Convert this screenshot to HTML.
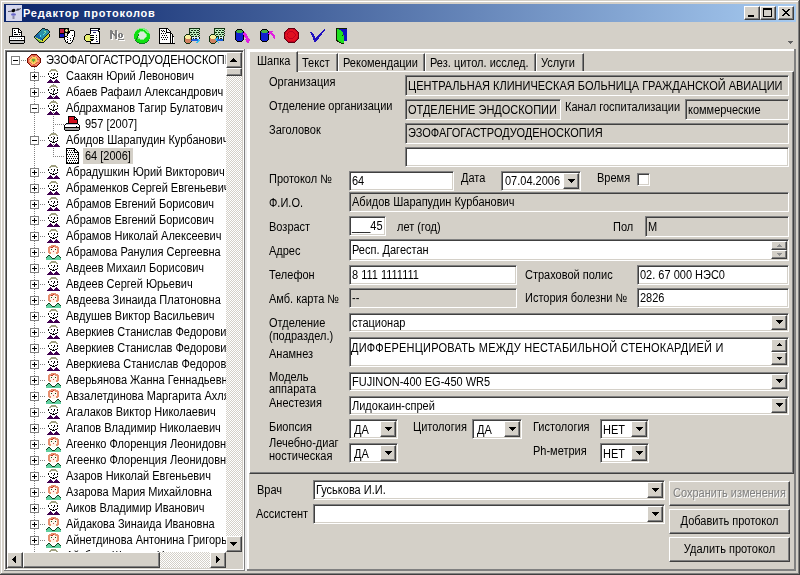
<!DOCTYPE html><html><head><meta charset="utf-8"><style>
html,body{margin:0;padding:0;width:800px;height:575px;overflow:hidden;background:#d4d0c8}
div,span,svg{position:absolute;box-sizing:border-box}
.t{font:12px/14px "Liberation Sans",sans-serif;white-space:pre;color:#000;transform:scaleX(0.9167);transform-origin:0 0;filter:contrast(1)}
</style></head><body>
<div style="left:0px;top:0px;width:800px;height:1px;background:#d4d0c8"></div>
<div style="left:0px;top:0px;width:1px;height:575px;background:#d4d0c8"></div>
<div style="left:1px;top:1px;width:798px;height:1px;background:#ffffff"></div>
<div style="left:1px;top:1px;width:1px;height:573px;background:#ffffff"></div>
<div style="left:0px;top:574px;width:800px;height:1px;background:#404040"></div>
<div style="left:799px;top:0px;width:1px;height:575px;background:#404040"></div>
<div style="left:1px;top:573px;width:798px;height:1px;background:#808080"></div>
<div style="left:798px;top:1px;width:1px;height:573px;background:#808080"></div>
<div style="left:4px;top:4px;width:792px;height:18px;background:linear-gradient(to right,#0a246a,#a6caf0)"></div>
<svg style="left:6px;top:5px" width="16" height="16"><rect width="16" height="16" fill="#d4d6ec"/><path d="M2 6.5L8 6M10 5.5L15 3.5" stroke="#505060" stroke-width="1" fill="none"/><ellipse cx="7.5" cy="5.5" rx="2" ry="1.6" fill="#000" transform="rotate(-25 7.5 5.5)"/><ellipse cx="12" cy="4.5" rx="1.5" ry="1" fill="#404050"/><ellipse cx="7.5" cy="9.5" rx="2.5" ry="1.2" fill="#6a68c8"/><rect x="6.5" y="11" width="2" height="3" fill="#8a8aa8"/></svg>
<span style="left:23px;top:7px;font:bold 11px/13px 'Liberation Sans',sans-serif;letter-spacing:0.8px;color:#fff;white-space:pre">Редактор протоколов</span>
<div style="left:744px;top:6px;width:16px;height:14px;background:#d4d0c8;border-style:solid;border-width:1px;border-color:#ffffff #404040 #404040 #ffffff;box-shadow:inset -1px -1px 0 #808080"></div>
<div style="left:748px;top:15px;width:6px;height:2px;background:#000"></div>
<div style="left:760px;top:6px;width:16px;height:14px;background:#d4d0c8;border-style:solid;border-width:1px;border-color:#ffffff #404040 #404040 #ffffff;box-shadow:inset -1px -1px 0 #808080"></div>
<div style="left:763px;top:8px;width:9px;height:9px;border:1px solid #000;border-top-width:2px"></div>
<div style="left:778px;top:6px;width:16px;height:14px;background:#d4d0c8;border-style:solid;border-width:1px;border-color:#ffffff #404040 #404040 #ffffff;box-shadow:inset -1px -1px 0 #808080"></div>
<svg style="left:782px;top:9px" width="8" height="7" shape-rendering="crispEdges"><path fill="#000" d="M0 0h2v1h-2zM6 0h2v1h-2zM1 1h2v1h-2zM5 1h2v1h-2zM2 2h4v1h-4zM3 3h2v1h-2zM2 4h4v1h-4zM1 5h2v1h-2zM5 5h2v1h-2zM0 6h2v1h-2zM6 6h2v1h-2z"/></svg>
<svg style="left:9px;top:28px" width="16" height="16" shape-rendering="crispEdges"><path fill="#000" d="M3 0h7v1h-7zM3 1h1v1h-1zM9 1h2v1h-2zM3 2h1v1h-1zM5 2h1v1h-1zM9 2h1v1h-1zM11 2h1v1h-1zM3 3h1v1h-1zM9 3h1v1h-1zM12 3h1v1h-1zM3 4h1v1h-1zM5 4h2v1h-2zM9 4h4v1h-4zM3 5h1v1h-1zM12 5h1v1h-1zM3 6h1v1h-1zM5 6h4v1h-4zM10 6h1v1h-1zM12 6h1v1h-1zM3 7h1v1h-1zM12 7h1v1h-1zM0 8h16v1h-16zM0 9h1v1h-1zM15 9h1v1h-1zM0 10h1v1h-1zM12 10h1v1h-1zM15 10h1v1h-1zM0 11h1v1h-1zM15 11h1v1h-1zM0 12h16v1h-16zM0 13h1v1h-1zM15 13h1v1h-1zM0 14h1v1h-1zM15 14h1v1h-1zM1 15h14v1h-14z"/><path fill="#fff" d="M4 1h5v1h-5zM4 2h1v1h-1zM6 2h3v1h-3zM10 2h1v1h-1zM4 3h5v1h-5zM10 3h2v1h-2zM4 4h1v1h-1zM7 4h2v1h-2zM4 5h8v1h-8zM4 6h1v1h-1zM9 6h1v1h-1zM11 6h1v1h-1zM4 7h8v1h-8zM1 9h14v1h-14zM1 10h1v1h-1zM3 10h1v1h-1zM5 10h1v1h-1zM7 10h1v1h-1zM9 10h1v1h-1zM11 10h1v1h-1zM13 10h2v1h-2zM1 11h14v1h-14z"/><path fill="#c0c0c0" d="M2 10h1v1h-1zM4 10h1v1h-1zM6 10h1v1h-1zM8 10h1v1h-1zM10 10h1v1h-1zM1 13h14v1h-14zM1 14h14v1h-14z"/></svg>
<svg style="left:34px;top:28px" width="16" height="16" shape-rendering="crispEdges"><path fill="#102020" d="M8 0h3v1h-3zM7 1h1v1h-1zM11 1h3v1h-3zM6 2h1v1h-1zM14 2h1v1h-1zM5 3h1v1h-1zM15 3h1v1h-1zM4 4h1v1h-1zM15 4h1v1h-1zM3 5h1v1h-1zM14 5h1v1h-1zM2 6h1v1h-1zM13 6h1v1h-1zM15 6h1v1h-1zM1 7h1v1h-1zM12 7h1v1h-1zM15 7h1v1h-1zM0 8h1v1h-1zM11 8h1v1h-1zM15 8h1v1h-1zM0 9h1v1h-1zM10 9h1v1h-1zM14 9h1v1h-1zM1 10h1v1h-1zM9 10h1v1h-1zM13 10h1v1h-1zM2 11h1v1h-1zM8 11h1v1h-1zM12 11h1v1h-1zM3 12h1v1h-1zM8 12h1v1h-1zM11 12h1v1h-1zM4 13h1v1h-1zM10 13h1v1h-1zM5 14h5v1h-5z"/><path fill="#2890a8" d="M8 1h3v1h-3zM7 2h7v1h-7zM6 3h4v1h-4zM12 3h3v1h-3zM5 4h6v1h-6zM12 4h3v1h-3zM4 5h6v1h-6zM11 5h3v1h-3zM5 6h4v1h-4zM10 6h3v1h-3zM7 7h5v1h-5zM7 8h4v1h-4zM7 9h3v1h-3zM8 10h1v1h-1z"/><path fill="#80e0a0" d="M10 3h2v1h-2zM11 4h1v1h-1zM10 5h1v1h-1z"/><path fill="#1868a8" d="M3 6h2v1h-2zM2 7h4v1h-4zM1 8h5v1h-5zM2 9h5v1h-5zM4 10h4v1h-4zM6 11h2v1h-2z"/><path fill="#50e0f0" d="M9 6h1v1h-1zM6 7h1v1h-1zM6 8h1v1h-1z"/><path fill="#d8d830" d="M14 6h1v1h-1zM13 7h2v1h-2zM12 8h3v1h-3zM11 9h3v1h-3zM10 10h3v1h-3zM9 11h3v1h-3zM9 12h2v1h-2zM7 13h3v1h-3z"/><path fill="#b8e060" d="M1 9h1v1h-1zM2 10h2v1h-2zM4 11h2v1h-2zM6 12h2v1h-2z"/><path fill="#80c030" d="M3 11h1v1h-1zM4 12h2v1h-2zM5 13h2v1h-2z"/></svg>
<svg style="left:59px;top:28px" width="16" height="16" shape-rendering="crispEdges"><path fill="#000" d="M0 0h10v1h-10zM0 1h1v1h-1zM5 1h1v1h-1zM9 1h1v1h-1zM0 2h1v1h-1zM5 2h1v1h-1zM9 2h1v1h-1zM11 2h4v1h-4zM0 3h1v1h-1zM5 3h1v1h-1zM9 3h2v1h-2zM15 3h1v1h-1zM0 4h1v1h-1zM5 4h6v1h-6zM15 4h1v1h-1zM0 5h6v1h-6zM8 5h2v1h-2zM15 5h1v1h-1zM0 6h1v1h-1zM5 6h1v1h-1zM8 6h1v1h-1zM15 6h1v1h-1zM0 7h1v1h-1zM5 7h1v1h-1zM8 7h1v1h-1zM13 7h1v1h-1zM15 7h1v1h-1zM0 8h1v1h-1zM5 8h3v1h-3zM15 8h1v1h-1zM0 9h6v1h-6zM8 9h1v1h-1zM14 9h1v1h-1zM5 10h1v1h-1zM11 10h1v1h-1zM14 10h1v1h-1zM5 11h1v1h-1zM8 11h1v1h-1zM14 11h1v1h-1zM6 12h1v1h-1zM11 12h1v1h-1zM13 12h1v1h-1zM6 13h1v1h-1zM8 13h1v1h-1zM13 13h1v1h-1zM7 14h2v1h-2zM12 14h1v1h-1zM9 15h3v1h-3z"/><path fill="#c02040" d="M1 1h4v1h-4zM1 2h4v1h-4zM1 3h4v1h-4zM1 4h4v1h-4z"/><path fill="#605830" d="M6 1h1v1h-1zM8 1h1v1h-1zM6 3h1v1h-1zM8 3h1v1h-1z"/><path fill="#e8e090" d="M7 1h1v1h-1zM6 2h3v1h-3zM7 3h1v1h-1z"/><path fill="#fff" d="M11 3h4v1h-4zM11 4h4v1h-4zM10 5h5v1h-5zM9 6h6v1h-6zM9 7h4v1h-4zM14 7h1v1h-1zM8 8h7v1h-7zM6 9h2v1h-2zM9 9h5v1h-5zM6 10h5v1h-5zM12 10h2v1h-2zM6 11h2v1h-2zM9 11h5v1h-5zM7 12h4v1h-4zM12 12h1v1h-1zM7 13h1v1h-1zM9 13h4v1h-4zM9 14h3v1h-3z"/><path fill="#1010c0" d="M1 6h4v1h-4zM1 7h4v1h-4zM1 8h4v1h-4z"/></svg>
<svg style="left:84px;top:28px" width="16" height="16" shape-rendering="crispEdges"><path fill="#000" d="M6 0h10v1h-10zM6 1h1v1h-1zM14 1h2v1h-2zM6 2h1v1h-1zM14 2h1v1h-1zM6 3h1v1h-1zM14 3h2v1h-2zM6 4h1v1h-1zM15 4h1v1h-1zM6 5h1v1h-1zM15 5h1v1h-1zM2 6h4v1h-4zM15 6h1v1h-1zM1 7h1v1h-1zM6 7h4v1h-4zM12 7h1v1h-1zM15 7h1v1h-1zM0 8h1v1h-1zM15 8h1v1h-1zM0 9h1v1h-1zM6 9h4v1h-4zM12 9h1v1h-1zM15 9h1v1h-1zM0 10h1v1h-1zM15 10h1v1h-1zM0 11h1v1h-1zM6 11h4v1h-4zM12 11h1v1h-1zM15 11h1v1h-1zM1 12h1v1h-1zM7 12h2v1h-2zM15 12h1v1h-1zM2 13h5v1h-5zM15 13h1v1h-1zM6 14h1v1h-1zM15 14h1v1h-1zM6 15h10v1h-10z"/><path fill="#fff" d="M7 1h7v1h-7zM15 2h1v1h-1zM7 3h7v1h-7zM7 4h2v1h-2zM12 4h3v1h-3zM7 5h8v1h-8zM6 6h9v1h-9zM10 7h2v1h-2zM13 7h2v1h-2zM7 8h8v1h-8zM10 9h2v1h-2zM13 9h2v1h-2zM7 10h8v1h-8zM10 11h2v1h-2zM13 11h2v1h-2zM9 12h6v1h-6zM7 13h5v1h-5zM14 13h1v1h-1zM7 14h8v1h-8z"/><path fill="#303070" d="M7 2h7v1h-7zM9 4h3v1h-3zM12 13h2v1h-2z"/><path fill="#e8f070" d="M2 7h4v1h-4zM1 8h6v1h-6zM1 9h5v1h-5zM1 10h6v1h-6zM1 11h5v1h-5zM2 12h5v1h-5z"/></svg>
<svg style="left:111px;top:31px" width="14" height="10" shape-rendering="crispEdges"><path fill="#fff" d="M0 0h2v1h-2zM5 0h2v1h-2zM0 1h3v1h-3zM5 1h2v1h-2zM0 2h3v1h-3zM5 2h2v1h-2zM0 3h4v1h-4zM5 3h2v1h-2zM9 3h3v1h-3zM0 4h2v1h-2zM3 4h4v1h-4zM8 4h2v1h-2zM11 4h2v1h-2zM0 5h2v1h-2zM4 5h3v1h-3zM8 5h2v1h-2zM11 5h2v1h-2zM0 6h2v1h-2zM5 6h2v1h-2zM8 6h2v1h-2zM11 6h2v1h-2zM0 7h2v1h-2zM5 7h2v1h-2zM9 7h3v1h-3zM0 8h2v1h-2zM5 8h2v1h-2zM8 9h6v1h-6z"/></svg>
<svg style="left:110px;top:30px" width="14" height="10" shape-rendering="crispEdges"><path fill="#808080" d="M0 0h2v1h-2zM5 0h2v1h-2zM0 1h3v1h-3zM5 1h2v1h-2zM0 2h3v1h-3zM5 2h2v1h-2zM0 3h4v1h-4zM5 3h2v1h-2zM9 3h3v1h-3zM0 4h2v1h-2zM3 4h4v1h-4zM8 4h2v1h-2zM11 4h2v1h-2zM0 5h2v1h-2zM4 5h3v1h-3zM8 5h2v1h-2zM11 5h2v1h-2zM0 6h2v1h-2zM5 6h2v1h-2zM8 6h2v1h-2zM11 6h2v1h-2zM0 7h2v1h-2zM5 7h2v1h-2zM9 7h3v1h-3zM0 8h2v1h-2zM5 8h2v1h-2zM8 9h6v1h-6z"/></svg>
<svg style="left:134px;top:28px" width="16" height="16" shape-rendering="crispEdges"><path fill="#80f080" d="M5 0h6v1h-6zM3 1h2v1h-2zM9 1h4v1h-4zM2 2h1v1h-1zM11 2h3v1h-3zM1 3h1v1h-1zM6 3h4v1h-4zM12 3h3v1h-3zM5 4h1v1h-1zM10 4h1v1h-1zM13 4h2v1h-2zM0 5h1v1h-1zM4 5h1v1h-1zM11 5h1v1h-1zM15 5h1v1h-1zM12 6h1v1h-1zM12 7h1v1h-1zM12 8h1v1h-1zM4 9h1v1h-1zM11 9h1v1h-1zM4 10h2v1h-2zM10 10h1v1h-1zM6 11h4v1h-4z"/><path fill="#10e010" d="M5 1h4v1h-4zM3 2h8v1h-8zM2 3h4v1h-4zM10 3h2v1h-2zM1 4h4v1h-4zM11 4h2v1h-2zM1 5h3v1h-3zM12 5h3v1h-3zM0 6h4v1h-4zM13 6h3v1h-3zM0 7h4v1h-4zM13 7h3v1h-3zM0 8h3v1h-3zM13 8h3v1h-3zM0 9h3v1h-3zM12 9h4v1h-4zM0 10h2v1h-2zM3 10h1v1h-1zM11 10h5v1h-5zM1 11h1v1h-1zM3 11h3v1h-3zM10 11h5v1h-5zM2 12h12v1h-12zM3 13h10v1h-10zM5 14h6v1h-6z"/><path fill="#d8ecd8" d="M6 4h4v1h-4zM5 5h6v1h-6zM5 6h7v1h-7zM5 7h7v1h-7zM4 8h8v1h-8zM5 9h6v1h-6zM6 10h4v1h-4z"/><path fill="#108020" d="M4 6h1v1h-1zM4 7h1v1h-1zM3 8h1v1h-1zM3 9h1v1h-1zM2 10h1v1h-1zM2 11h1v1h-1zM1 12h1v1h-1zM14 12h1v1h-1zM2 13h1v1h-1zM13 13h1v1h-1zM3 14h2v1h-2zM11 14h2v1h-2zM5 15h6v1h-6z"/></svg>
<svg style="left:158px;top:28px" width="17" height="16" shape-rendering="crispEdges"><path fill="#000" d="M1 0h9v1h-9zM1 1h1v1h-1zM8 1h1v1h-1zM10 1h1v1h-1zM1 2h1v1h-1zM3 2h1v1h-1zM5 2h1v1h-1zM8 2h1v1h-1zM11 2h1v1h-1zM1 3h1v1h-1zM4 3h1v1h-1zM6 3h1v1h-1zM8 3h1v1h-1zM12 3h1v1h-1zM1 4h1v1h-1zM8 4h5v1h-5zM1 5h1v1h-1zM3 5h1v1h-1zM5 5h1v1h-1zM7 5h1v1h-1zM12 5h2v1h-2zM1 6h1v1h-1zM12 6h1v1h-1zM14 6h1v1h-1zM1 7h1v1h-1zM4 7h1v1h-1zM6 7h1v1h-1zM8 7h1v1h-1zM12 7h1v1h-1zM14 7h1v1h-1zM1 8h1v1h-1zM12 8h1v1h-1zM14 8h2v1h-2zM1 9h1v1h-1zM3 9h1v1h-1zM5 9h1v1h-1zM7 9h1v1h-1zM9 9h1v1h-1zM12 9h1v1h-1zM14 9h1v1h-1zM1 10h1v1h-1zM12 10h1v1h-1zM14 10h1v1h-1zM1 11h1v1h-1zM4 11h1v1h-1zM6 11h1v1h-1zM8 11h1v1h-1zM12 11h1v1h-1zM14 11h1v1h-1zM1 12h1v1h-1zM12 12h1v1h-1zM14 12h1v1h-1zM1 13h1v1h-1zM12 13h1v1h-1zM14 13h1v1h-1zM1 14h1v1h-1zM12 14h1v1h-1zM14 14h1v1h-1zM1 15h16v1h-16z"/><path fill="#fff" d="M2 1h6v1h-6zM9 1h1v1h-1zM2 2h1v1h-1zM4 2h1v1h-1zM6 2h2v1h-2zM9 2h2v1h-2zM2 3h2v1h-2zM5 3h1v1h-1zM7 3h1v1h-1zM9 3h3v1h-3zM2 4h6v1h-6zM2 5h1v1h-1zM4 5h1v1h-1zM6 5h1v1h-1zM8 5h4v1h-4zM2 6h10v1h-10zM13 6h1v1h-1zM2 7h2v1h-2zM5 7h1v1h-1zM7 7h1v1h-1zM9 7h3v1h-3zM13 7h1v1h-1zM2 8h10v1h-10zM13 8h1v1h-1zM2 9h1v1h-1zM4 9h1v1h-1zM6 9h1v1h-1zM8 9h1v1h-1zM10 9h2v1h-2zM13 9h1v1h-1zM15 9h1v1h-1zM2 10h10v1h-10zM13 10h1v1h-1zM15 10h1v1h-1zM2 11h2v1h-2zM5 11h1v1h-1zM7 11h1v1h-1zM9 11h3v1h-3zM13 11h1v1h-1zM15 11h1v1h-1zM2 12h10v1h-10zM13 12h1v1h-1zM15 12h1v1h-1zM2 13h10v1h-10zM13 13h1v1h-1zM15 13h1v1h-1zM2 14h10v1h-10zM13 14h1v1h-1zM15 14h1v1h-1z"/></svg>
<svg style="left:184px;top:28px" width="16" height="16" shape-rendering="crispEdges"><path fill="#103010" d="M5 0h11v1h-11zM5 1h1v1h-1zM15 1h1v1h-1zM5 2h1v1h-1zM7 2h2v1h-2zM10 2h2v1h-2zM13 2h2v1h-2zM5 3h1v1h-1zM15 3h1v1h-1zM5 4h3v1h-3zM9 4h2v1h-2zM12 4h3v1h-3zM5 5h1v1h-1zM15 5h1v1h-1zM2 6h4v1h-4zM7 6h2v1h-2zM10 6h2v1h-2zM13 6h2v1h-2zM1 7h1v1h-1zM6 7h1v1h-1zM15 7h1v1h-1zM0 8h1v1h-1zM7 8h3v1h-3zM11 8h2v1h-2zM14 8h1v1h-1zM0 9h1v1h-1zM7 9h1v1h-1zM15 9h1v1h-1zM0 10h1v1h-1zM7 10h1v1h-1zM9 10h1v1h-1zM11 10h2v1h-2zM15 10h1v1h-1zM0 11h1v1h-1zM7 11h1v1h-1zM0 12h1v1h-1zM0 13h1v1h-1zM7 13h1v1h-1zM1 14h1v1h-1zM6 14h1v1h-1zM2 15h4v1h-4z"/><path fill="#a0d8a0" d="M6 1h1v1h-1zM9 1h1v1h-1zM12 1h1v1h-1zM6 3h1v1h-1zM9 3h1v1h-1zM12 3h1v1h-1zM6 5h1v1h-1zM9 5h1v1h-1zM12 5h1v1h-1zM9 7h1v1h-1zM12 7h1v1h-1z"/><path fill="#c8f0c8" d="M7 1h2v1h-2zM10 1h2v1h-2zM13 1h2v1h-2zM6 2h1v1h-1zM9 2h1v1h-1zM12 2h1v1h-1zM7 3h2v1h-2zM10 3h2v1h-2zM13 3h2v1h-2zM8 4h1v1h-1zM11 4h1v1h-1zM7 5h2v1h-2zM10 5h2v1h-2zM13 5h2v1h-2zM6 6h1v1h-1zM9 6h1v1h-1zM12 6h1v1h-1zM7 7h2v1h-2zM10 7h2v1h-2zM13 7h2v1h-2zM10 8h1v1h-1zM13 8h1v1h-1z"/><path fill="#f8f0a0" d="M2 7h4v1h-4zM1 8h6v1h-6zM1 9h6v1h-6zM2 10h4v1h-4z"/><path fill="#e0e8ff" d="M8 9h7v1h-7zM8 10h1v1h-1zM10 10h1v1h-1zM13 10h2v1h-2z"/><path fill="#d08060" d="M1 10h1v1h-1zM6 10h1v1h-1zM1 11h6v1h-6zM1 12h6v1h-6zM1 13h6v1h-6zM2 14h4v1h-4z"/><path fill="#2060e0" d="M8 11h6v1h-6zM7 12h7v1h-7z"/><path fill="#30c0f0" d="M14 11h1v1h-1zM14 12h2v1h-2zM13 13h2v1h-2zM12 14h2v1h-2z"/></svg>
<svg style="left:209px;top:28px" width="16" height="16" shape-rendering="crispEdges"><path fill="#103010" d="M5 0h11v1h-11zM5 1h1v1h-1zM15 1h1v1h-1zM5 2h1v1h-1zM7 2h2v1h-2zM10 2h2v1h-2zM13 2h2v1h-2zM5 3h1v1h-1zM15 3h1v1h-1zM5 4h3v1h-3zM9 4h2v1h-2zM12 4h3v1h-3zM5 5h1v1h-1zM15 5h1v1h-1zM2 6h4v1h-4zM7 6h2v1h-2zM10 6h2v1h-2zM13 6h2v1h-2zM1 7h1v1h-1zM6 7h1v1h-1zM15 7h1v1h-1zM0 8h1v1h-1zM7 8h3v1h-3zM11 8h2v1h-2zM14 8h1v1h-1zM0 9h1v1h-1zM7 9h1v1h-1zM9 9h1v1h-1zM14 9h1v1h-1zM0 10h1v1h-1zM9 10h1v1h-1zM11 10h2v1h-2zM14 10h1v1h-1zM0 11h1v1h-1zM14 11h1v1h-1zM0 12h1v1h-1zM14 12h1v1h-1zM0 13h1v1h-1zM7 13h1v1h-1zM1 14h1v1h-1zM6 14h1v1h-1zM2 15h4v1h-4z"/><path fill="#a0d8a0" d="M6 1h1v1h-1zM9 1h1v1h-1zM12 1h1v1h-1zM6 3h1v1h-1zM9 3h1v1h-1zM12 3h1v1h-1zM6 5h1v1h-1zM9 5h1v1h-1zM12 5h1v1h-1zM9 7h1v1h-1zM12 7h1v1h-1z"/><path fill="#c8f0c8" d="M7 1h2v1h-2zM10 1h2v1h-2zM13 1h2v1h-2zM6 2h1v1h-1zM9 2h1v1h-1zM12 2h1v1h-1zM7 3h2v1h-2zM10 3h2v1h-2zM13 3h2v1h-2zM8 4h1v1h-1zM11 4h1v1h-1zM7 5h2v1h-2zM10 5h2v1h-2zM13 5h2v1h-2zM6 6h1v1h-1zM9 6h1v1h-1zM12 6h1v1h-1zM7 7h2v1h-2zM10 7h2v1h-2zM13 7h2v1h-2zM10 8h1v1h-1zM13 8h1v1h-1z"/><path fill="#f8f0a0" d="M2 7h4v1h-4zM1 8h6v1h-6zM1 9h6v1h-6zM2 10h4v1h-4z"/><path fill="#30c0f0" d="M8 9h1v1h-1zM7 10h2v1h-2zM6 11h2v1h-2zM7 12h1v1h-1zM8 13h1v1h-1zM9 14h1v1h-1z"/><path fill="#e0e8ff" d="M10 9h4v1h-4zM10 10h1v1h-1zM13 10h1v1h-1z"/><path fill="#d08060" d="M1 10h1v1h-1zM6 10h1v1h-1zM1 11h5v1h-5zM1 12h6v1h-6zM1 13h6v1h-6zM2 14h4v1h-4z"/><path fill="#2060e0" d="M8 11h6v1h-6zM8 12h6v1h-6z"/></svg>
<svg style="left:234px;top:28px" width="16" height="16" shape-rendering="crispEdges"><path fill="#000" d="M3 1h5v1h-5zM2 2h1v1h-1zM8 2h1v1h-1zM1 3h1v1h-1zM9 3h1v1h-1zM1 4h1v1h-1zM9 4h1v1h-1zM1 5h1v1h-1zM1 6h1v1h-1zM1 7h1v1h-1zM9 7h1v1h-1zM1 8h1v1h-1zM9 8h1v1h-1zM1 9h1v1h-1zM9 9h1v1h-1zM1 10h1v1h-1zM9 10h1v1h-1zM1 11h1v1h-1zM9 11h1v1h-1zM2 12h1v1h-1zM8 12h1v1h-1zM3 13h5v1h-5z"/><path fill="#40b040" d="M3 2h5v1h-5zM2 3h7v1h-7zM3 4h5v1h-5z"/><path fill="#1020d0" d="M2 4h1v1h-1zM8 4h1v1h-1zM2 5h7v1h-7zM2 6h7v1h-7zM2 7h7v1h-7zM2 8h7v1h-7zM2 9h7v1h-7zM2 10h7v1h-7zM2 11h7v1h-7zM3 12h5v1h-5z"/><path fill="#e020e0" d="M10 4h1v1h-1zM9 5h3v1h-3zM9 6h4v1h-4zM10 7h3v1h-3zM10 8h4v1h-4zM11 9h3v1h-3zM12 10h3v1h-3zM11 11h5v1h-5zM12 12h4v1h-4zM12 13h3v1h-3zM13 14h2v1h-2z"/></svg>
<svg style="left:259px;top:28px" width="16" height="16" shape-rendering="crispEdges"><path fill="#000" d="M3 1h5v1h-5zM2 2h1v1h-1zM8 2h1v1h-1zM1 3h1v1h-1zM9 3h1v1h-1zM1 4h1v1h-1zM9 4h1v1h-1zM1 5h1v1h-1zM1 6h1v1h-1zM9 6h1v1h-1zM1 7h1v1h-1zM9 7h1v1h-1zM1 8h1v1h-1zM9 8h1v1h-1zM1 9h1v1h-1zM9 9h1v1h-1zM1 10h1v1h-1zM9 10h1v1h-1zM1 11h1v1h-1zM9 11h1v1h-1zM2 12h1v1h-1zM8 12h1v1h-1zM3 13h5v1h-5z"/><path fill="#40b040" d="M3 2h5v1h-5zM2 3h7v1h-7zM3 4h5v1h-5z"/><path fill="#e020e0" d="M10 3h4v1h-4zM10 4h3v1h-3zM9 5h5v1h-5zM10 6h1v1h-1zM12 6h3v1h-3zM13 7h3v1h-3zM14 8h2v1h-2zM14 9h2v1h-2zM15 10h1v1h-1z"/><path fill="#1020d0" d="M2 4h1v1h-1zM8 4h1v1h-1zM2 5h7v1h-7zM2 6h7v1h-7zM2 7h7v1h-7zM2 8h7v1h-7zM2 9h7v1h-7zM2 10h7v1h-7zM2 11h7v1h-7zM3 12h5v1h-5z"/></svg>
<svg style="left:284px;top:28px" width="16" height="16" shape-rendering="crispEdges"><path fill="#600010" d="M4 0h7v1h-7zM3 1h1v1h-1zM11 1h1v1h-1zM2 2h1v1h-1zM12 2h1v1h-1zM1 3h1v1h-1zM13 3h1v1h-1zM0 4h1v1h-1zM14 4h1v1h-1zM0 5h1v1h-1zM14 5h1v1h-1zM0 6h1v1h-1zM14 6h1v1h-1zM0 7h1v1h-1zM14 7h1v1h-1zM0 8h1v1h-1zM14 8h1v1h-1zM0 9h1v1h-1zM14 9h1v1h-1zM0 10h1v1h-1zM14 10h1v1h-1zM1 11h1v1h-1zM13 11h1v1h-1zM2 12h1v1h-1zM12 12h1v1h-1zM3 13h1v1h-1zM11 13h1v1h-1zM4 14h7v1h-7z"/><path fill="#c00020" d="M4 1h2v1h-2zM9 1h2v1h-2zM3 2h1v1h-1zM11 2h1v1h-1zM2 3h1v1h-1zM5 3h4v1h-4zM12 3h1v1h-1zM1 4h1v1h-1zM4 4h1v1h-1zM9 4h1v1h-1zM13 4h1v1h-1zM1 5h1v1h-1zM3 5h1v1h-1zM10 5h1v1h-1zM13 5h1v1h-1zM3 6h1v1h-1zM11 6h1v1h-1zM11 7h1v1h-1zM3 8h1v1h-1zM10 8h1v1h-1zM1 9h1v1h-1zM4 9h1v1h-1zM9 9h1v1h-1zM13 9h1v1h-1zM1 10h1v1h-1zM5 10h4v1h-4zM13 10h1v1h-1zM2 11h1v1h-1zM12 11h1v1h-1zM3 12h1v1h-1zM11 12h1v1h-1zM4 13h7v1h-7z"/><path fill="#e01020" d="M6 1h3v1h-3zM4 2h7v1h-7zM3 3h2v1h-2zM9 3h3v1h-3zM2 4h2v1h-2zM5 4h4v1h-4zM10 4h3v1h-3zM2 5h1v1h-1zM4 5h6v1h-6zM11 5h2v1h-2zM1 6h2v1h-2zM4 6h7v1h-7zM12 6h2v1h-2zM1 7h10v1h-10zM12 7h2v1h-2zM1 8h2v1h-2zM4 8h6v1h-6zM11 8h3v1h-3zM2 9h2v1h-2zM5 9h4v1h-4zM10 9h3v1h-3zM2 10h3v1h-3zM9 10h4v1h-4zM3 11h9v1h-9zM4 12h7v1h-7z"/></svg>
<svg style="left:309px;top:28px" width="16" height="16" shape-rendering="crispEdges"><path fill="#2010c0" d="M15 1h1v1h-1zM14 2h2v1h-2zM13 3h2v1h-2zM1 4h2v1h-2zM12 4h2v1h-2zM2 5h2v1h-2zM11 5h2v1h-2zM2 6h3v1h-3zM10 6h3v1h-3zM3 7h2v1h-2zM9 7h3v1h-3zM3 8h3v1h-3zM8 8h3v1h-3zM4 9h2v1h-2zM7 9h3v1h-3zM4 10h6v1h-6zM4 11h5v1h-5zM5 12h3v1h-3zM5 13h2v1h-2z"/></svg>
<svg style="left:334px;top:28px" width="16" height="16" shape-rendering="crispEdges"><path fill="#102000" d="M2 0h11v1h-11zM2 1h1v1h-1zM2 2h1v1h-1zM2 3h1v1h-1zM2 4h1v1h-1zM2 5h1v1h-1zM2 6h1v1h-1zM2 7h1v1h-1zM8 7h1v1h-1zM2 8h1v1h-1zM2 9h1v1h-1zM2 10h1v1h-1zM2 11h1v1h-1zM2 12h2v1h-2zM3 13h2v1h-2zM5 14h2v1h-2zM7 15h3v1h-3z"/><path fill="#20e020" d="M3 1h2v1h-2zM3 2h4v1h-4zM3 3h5v1h-5zM3 4h6v1h-6zM3 5h6v1h-6zM3 6h6v1h-6zM3 7h5v1h-5zM9 7h1v1h-1zM3 8h7v1h-7zM3 9h7v1h-7zM3 10h7v1h-7zM3 11h7v1h-7zM4 12h6v1h-6zM5 13h5v1h-5zM7 14h3v1h-3z"/><path fill="#1010c0" d="M5 1h8v1h-8zM7 2h6v1h-6zM8 3h5v1h-5zM9 4h4v1h-4zM9 5h4v1h-4zM9 6h4v1h-4zM10 7h3v1h-3zM10 8h3v1h-3zM10 9h3v1h-3zM10 10h3v1h-3zM10 11h3v1h-3zM10 12h3v1h-3z"/></svg>
<svg style="left:788px;top:41px" width="5" height="3" shape-rendering="crispEdges"><path fill="#606060" d="M0 0h5v1h-5zM1 1h3v1h-3zM2 2h1v1h-1z"/></svg>
<div style="left:4px;top:49px;width:1px;height:522px;background:#ffffff"></div>
<div style="left:4px;top:49px;width:240px;height:1px;background:#ffffff"></div>
<div style="left:4px;top:570px;width:241px;height:1px;background:#808080"></div>
<div style="left:5px;top:50px;width:239px;height:520px;background:#fff;border-style:solid;border-width:1px;border-color:#808080 #ffffff #ffffff #808080;box-shadow:inset 1px 1px 0 #404040,inset -1px -1px 0 #d4d0c8"></div>
<div style="left:7px;top:52px;width:219px;height:500px;overflow:hidden">
<svg style="left:0;top:0" width="219" height="500" shape-rendering="crispEdges"><path fill="#808080" d="M14 8h1v1h-1zM16 8h1v1h-1zM18 8h1v1h-1zM27 15h1v1h-1zM27 17h1v1h-1zM27 19h1v1h-1zM27 21h1v1h-1zM27 23h1v1h-1zM27 25h1v1h-1zM27 27h1v1h-1zM27 29h1v1h-1zM27 31h1v1h-1zM27 33h1v1h-1zM27 35h1v1h-1zM27 37h1v1h-1zM27 39h1v1h-1zM27 41h1v1h-1zM27 43h1v1h-1zM27 45h1v1h-1zM27 47h1v1h-1zM27 49h1v1h-1zM27 51h1v1h-1zM27 53h1v1h-1zM27 55h1v1h-1zM27 57h1v1h-1zM27 59h1v1h-1zM27 61h1v1h-1zM27 63h1v1h-1zM27 65h1v1h-1zM27 67h1v1h-1zM27 69h1v1h-1zM27 71h1v1h-1zM27 73h1v1h-1zM27 75h1v1h-1zM27 77h1v1h-1zM27 79h1v1h-1zM27 81h1v1h-1zM27 83h1v1h-1zM27 85h1v1h-1zM27 87h1v1h-1zM27 89h1v1h-1zM27 91h1v1h-1zM27 93h1v1h-1zM27 95h1v1h-1zM27 97h1v1h-1zM27 99h1v1h-1zM27 101h1v1h-1zM27 103h1v1h-1zM27 105h1v1h-1zM27 107h1v1h-1zM27 109h1v1h-1zM27 111h1v1h-1zM27 113h1v1h-1zM27 115h1v1h-1zM27 117h1v1h-1zM27 119h1v1h-1zM27 121h1v1h-1zM27 123h1v1h-1zM27 125h1v1h-1zM27 127h1v1h-1zM27 129h1v1h-1zM27 131h1v1h-1zM27 133h1v1h-1zM27 135h1v1h-1zM27 137h1v1h-1zM27 139h1v1h-1zM27 141h1v1h-1zM27 143h1v1h-1zM27 145h1v1h-1zM27 147h1v1h-1zM27 149h1v1h-1zM27 151h1v1h-1zM27 153h1v1h-1zM27 155h1v1h-1zM27 157h1v1h-1zM27 159h1v1h-1zM27 161h1v1h-1zM27 163h1v1h-1zM27 165h1v1h-1zM27 167h1v1h-1zM27 169h1v1h-1zM27 171h1v1h-1zM27 173h1v1h-1zM27 175h1v1h-1zM27 177h1v1h-1zM27 179h1v1h-1zM27 181h1v1h-1zM27 183h1v1h-1zM27 185h1v1h-1zM27 187h1v1h-1zM27 189h1v1h-1zM27 191h1v1h-1zM27 193h1v1h-1zM27 195h1v1h-1zM27 197h1v1h-1zM27 199h1v1h-1zM27 201h1v1h-1zM27 203h1v1h-1zM27 205h1v1h-1zM27 207h1v1h-1zM27 209h1v1h-1zM27 211h1v1h-1zM27 213h1v1h-1zM27 215h1v1h-1zM27 217h1v1h-1zM27 219h1v1h-1zM27 221h1v1h-1zM27 223h1v1h-1zM27 225h1v1h-1zM27 227h1v1h-1zM27 229h1v1h-1zM27 231h1v1h-1zM27 233h1v1h-1zM27 235h1v1h-1zM27 237h1v1h-1zM27 239h1v1h-1zM27 241h1v1h-1zM27 243h1v1h-1zM27 245h1v1h-1zM27 247h1v1h-1zM27 249h1v1h-1zM27 251h1v1h-1zM27 253h1v1h-1zM27 255h1v1h-1zM27 257h1v1h-1zM27 259h1v1h-1zM27 261h1v1h-1zM27 263h1v1h-1zM27 265h1v1h-1zM27 267h1v1h-1zM27 269h1v1h-1zM27 271h1v1h-1zM27 273h1v1h-1zM27 275h1v1h-1zM27 277h1v1h-1zM27 279h1v1h-1zM27 281h1v1h-1zM27 283h1v1h-1zM27 285h1v1h-1zM27 287h1v1h-1zM27 289h1v1h-1zM27 291h1v1h-1zM27 293h1v1h-1zM27 295h1v1h-1zM27 297h1v1h-1zM27 299h1v1h-1zM27 301h1v1h-1zM27 303h1v1h-1zM27 305h1v1h-1zM27 307h1v1h-1zM27 309h1v1h-1zM27 311h1v1h-1zM27 313h1v1h-1zM27 315h1v1h-1zM27 317h1v1h-1zM27 319h1v1h-1zM27 321h1v1h-1zM27 323h1v1h-1zM27 325h1v1h-1zM27 327h1v1h-1zM27 329h1v1h-1zM27 331h1v1h-1zM27 333h1v1h-1zM27 335h1v1h-1zM27 337h1v1h-1zM27 339h1v1h-1zM27 341h1v1h-1zM27 343h1v1h-1zM27 345h1v1h-1zM27 347h1v1h-1zM27 349h1v1h-1zM27 351h1v1h-1zM27 353h1v1h-1zM27 355h1v1h-1zM27 357h1v1h-1zM27 359h1v1h-1zM27 361h1v1h-1zM27 363h1v1h-1zM27 365h1v1h-1zM27 367h1v1h-1zM27 369h1v1h-1zM27 371h1v1h-1zM27 373h1v1h-1zM27 375h1v1h-1zM27 377h1v1h-1zM27 379h1v1h-1zM27 381h1v1h-1zM27 383h1v1h-1zM27 385h1v1h-1zM27 387h1v1h-1zM27 389h1v1h-1zM27 391h1v1h-1zM27 393h1v1h-1zM27 395h1v1h-1zM27 397h1v1h-1zM27 399h1v1h-1zM27 401h1v1h-1zM27 403h1v1h-1zM27 405h1v1h-1zM27 407h1v1h-1zM27 409h1v1h-1zM27 411h1v1h-1zM27 413h1v1h-1zM27 415h1v1h-1zM27 417h1v1h-1zM27 419h1v1h-1zM27 421h1v1h-1zM27 423h1v1h-1zM27 425h1v1h-1zM27 427h1v1h-1zM27 429h1v1h-1zM27 431h1v1h-1zM27 433h1v1h-1zM27 435h1v1h-1zM27 437h1v1h-1zM27 439h1v1h-1zM27 441h1v1h-1zM27 443h1v1h-1zM27 445h1v1h-1zM27 447h1v1h-1zM27 449h1v1h-1zM27 451h1v1h-1zM27 453h1v1h-1zM27 455h1v1h-1zM27 457h1v1h-1zM27 459h1v1h-1zM27 461h1v1h-1zM27 463h1v1h-1zM27 465h1v1h-1zM27 467h1v1h-1zM27 469h1v1h-1zM27 471h1v1h-1zM27 473h1v1h-1zM27 475h1v1h-1zM27 477h1v1h-1zM27 479h1v1h-1zM27 481h1v1h-1zM27 483h1v1h-1zM27 485h1v1h-1zM27 487h1v1h-1zM27 489h1v1h-1zM27 491h1v1h-1zM27 493h1v1h-1zM27 495h1v1h-1zM27 497h1v1h-1zM27 499h1v1h-1zM27 501h1v1h-1zM27 503h1v1h-1zM27 505h1v1h-1zM27 507h1v1h-1zM33 24h1v1h-1zM35 24h1v1h-1zM37 24h1v1h-1zM33 40h1v1h-1zM35 40h1v1h-1zM37 40h1v1h-1zM33 56h1v1h-1zM35 56h1v1h-1zM37 56h1v1h-1zM48 72h1v1h-1zM50 72h1v1h-1zM52 72h1v1h-1zM54 72h1v1h-1zM56 72h1v1h-1zM33 88h1v1h-1zM35 88h1v1h-1zM37 88h1v1h-1zM48 104h1v1h-1zM50 104h1v1h-1zM52 104h1v1h-1zM54 104h1v1h-1zM56 104h1v1h-1zM33 120h1v1h-1zM35 120h1v1h-1zM37 120h1v1h-1zM33 136h1v1h-1zM35 136h1v1h-1zM37 136h1v1h-1zM33 152h1v1h-1zM35 152h1v1h-1zM37 152h1v1h-1zM33 168h1v1h-1zM35 168h1v1h-1zM37 168h1v1h-1zM33 184h1v1h-1zM35 184h1v1h-1zM37 184h1v1h-1zM33 200h1v1h-1zM35 200h1v1h-1zM37 200h1v1h-1zM33 216h1v1h-1zM35 216h1v1h-1zM37 216h1v1h-1zM33 232h1v1h-1zM35 232h1v1h-1zM37 232h1v1h-1zM33 248h1v1h-1zM35 248h1v1h-1zM37 248h1v1h-1zM33 264h1v1h-1zM35 264h1v1h-1zM37 264h1v1h-1zM33 280h1v1h-1zM35 280h1v1h-1zM37 280h1v1h-1zM33 296h1v1h-1zM35 296h1v1h-1zM37 296h1v1h-1zM33 312h1v1h-1zM35 312h1v1h-1zM37 312h1v1h-1zM33 328h1v1h-1zM35 328h1v1h-1zM37 328h1v1h-1zM33 344h1v1h-1zM35 344h1v1h-1zM37 344h1v1h-1zM33 360h1v1h-1zM35 360h1v1h-1zM37 360h1v1h-1zM33 376h1v1h-1zM35 376h1v1h-1zM37 376h1v1h-1zM33 392h1v1h-1zM35 392h1v1h-1zM37 392h1v1h-1zM33 408h1v1h-1zM35 408h1v1h-1zM37 408h1v1h-1zM33 424h1v1h-1zM35 424h1v1h-1zM37 424h1v1h-1zM33 440h1v1h-1zM35 440h1v1h-1zM37 440h1v1h-1zM33 456h1v1h-1zM35 456h1v1h-1zM37 456h1v1h-1zM33 472h1v1h-1zM35 472h1v1h-1zM37 472h1v1h-1zM33 488h1v1h-1zM35 488h1v1h-1zM37 488h1v1h-1zM33 504h1v1h-1zM35 504h1v1h-1zM37 504h1v1h-1zM46 32h1v1h-1zM46 34h1v1h-1zM46 36h1v1h-1zM46 38h1v1h-1zM46 40h1v1h-1zM46 42h1v1h-1zM46 44h1v1h-1zM46 46h1v1h-1zM46 48h1v1h-1zM46 50h1v1h-1zM46 52h1v1h-1zM46 54h1v1h-1zM46 56h1v1h-1zM46 58h1v1h-1zM46 60h1v1h-1zM46 62h1v1h-1zM46 64h1v1h-1zM46 66h1v1h-1zM46 68h1v1h-1zM46 70h1v1h-1zM46 72h1v1h-1zM46 64h1v1h-1zM46 66h1v1h-1zM46 68h1v1h-1zM46 70h1v1h-1zM46 72h1v1h-1zM46 74h1v1h-1zM46 76h1v1h-1zM46 78h1v1h-1zM46 80h1v1h-1zM46 82h1v1h-1zM46 84h1v1h-1zM46 86h1v1h-1zM46 88h1v1h-1zM46 90h1v1h-1zM46 92h1v1h-1zM46 94h1v1h-1zM46 96h1v1h-1zM46 98h1v1h-1zM46 100h1v1h-1zM46 102h1v1h-1zM46 104h1v1h-1z"/></svg>
<svg style="left:4px;top:4px" width="9" height="9" shape-rendering="crispEdges"><path fill="#808080" d="M0 0h9v1h-9zM0 1h1v1h-1zM8 1h1v1h-1zM0 2h1v1h-1zM8 2h1v1h-1zM0 3h1v1h-1zM8 3h1v1h-1zM0 4h1v1h-1zM8 4h1v1h-1zM0 5h1v1h-1zM8 5h1v1h-1zM0 6h1v1h-1zM8 6h1v1h-1zM0 7h1v1h-1zM8 7h1v1h-1zM0 8h9v1h-9z"/><path fill="#fff" d="M1 1h7v1h-7zM1 2h7v1h-7zM1 3h7v1h-7zM1 4h1v1h-1zM7 4h1v1h-1zM1 5h7v1h-7zM1 6h7v1h-7zM1 7h7v1h-7z"/><path fill="#000" d="M2 4h5v1h-5z"/></svg>
<svg style="left:20px;top:1px" width="16" height="16" shape-rendering="crispEdges"><path fill="#700800" d="M4 1h6v1h-6zM3 2h1v1h-1zM10 2h1v1h-1zM2 3h1v1h-1zM11 3h1v1h-1zM1 4h1v1h-1zM12 4h1v1h-1zM0 5h1v1h-1zM13 5h1v1h-1zM0 6h1v1h-1zM13 6h1v1h-1zM0 7h1v1h-1zM13 7h1v1h-1zM0 8h1v1h-1zM13 8h1v1h-1zM0 9h1v1h-1zM13 9h1v1h-1zM1 10h1v1h-1zM12 10h1v1h-1zM2 11h1v1h-1zM11 11h1v1h-1zM3 12h1v1h-1zM10 12h1v1h-1zM4 13h6v1h-6z"/><path fill="#e86848" d="M4 2h6v1h-6zM3 3h1v1h-1zM6 3h2v1h-2zM10 3h1v1h-1zM2 4h1v1h-1zM4 4h1v1h-1zM9 4h1v1h-1zM11 4h1v1h-1zM1 5h1v1h-1zM3 5h1v1h-1zM10 5h1v1h-1zM12 5h1v1h-1zM1 6h2v1h-2zM10 6h3v1h-3zM1 7h1v1h-1zM12 7h1v1h-1zM1 8h1v1h-1zM12 8h1v1h-1zM1 9h3v1h-3zM9 9h4v1h-4zM2 10h1v1h-1zM4 10h1v1h-1zM8 10h2v1h-2zM11 10h1v1h-1zM3 11h1v1h-1zM6 11h2v1h-2zM10 11h1v1h-1zM4 12h6v1h-6z"/><path fill="#f8a080" d="M4 3h2v1h-2zM8 3h2v1h-2zM3 4h1v1h-1zM10 4h1v1h-1zM2 5h1v1h-1zM11 5h1v1h-1zM2 7h1v1h-1zM10 7h2v1h-2zM2 8h1v1h-1zM10 8h2v1h-2zM3 10h1v1h-1zM10 10h1v1h-1zM4 11h2v1h-2zM8 11h2v1h-2z"/><path fill="#f8d860" d="M5 4h4v1h-4zM4 5h1v1h-1zM8 5h2v1h-2zM3 6h1v1h-1zM9 6h1v1h-1zM3 7h1v1h-1zM9 7h1v1h-1zM3 8h1v1h-1zM9 8h1v1h-1zM4 9h2v1h-2zM7 9h2v1h-2zM5 10h3v1h-3z"/><path fill="#f0b050" d="M5 5h3v1h-3zM4 6h1v1h-1zM8 6h1v1h-1zM4 7h1v1h-1zM8 7h1v1h-1zM4 8h2v1h-2zM7 8h2v1h-2zM6 9h1v1h-1z"/><path fill="#60b030" d="M5 6h3v1h-3zM5 7h3v1h-3zM6 8h1v1h-1z"/></svg>
<span class="t" style="left:39px;top:1px;">ЭЗОФАГОГАСТРОДУОДЕНОСКОПИЯ</span>
<svg style="left:23px;top:20px" width="9" height="9" shape-rendering="crispEdges"><path fill="#808080" d="M0 0h9v1h-9zM0 1h1v1h-1zM8 1h1v1h-1zM0 2h1v1h-1zM8 2h1v1h-1zM0 3h1v1h-1zM8 3h1v1h-1zM0 4h1v1h-1zM8 4h1v1h-1zM0 5h1v1h-1zM8 5h1v1h-1zM0 6h1v1h-1zM8 6h1v1h-1zM0 7h1v1h-1zM8 7h1v1h-1zM0 8h9v1h-9z"/><path fill="#fff" d="M1 1h7v1h-7zM1 2h3v1h-3zM5 2h3v1h-3zM1 3h3v1h-3zM5 3h3v1h-3zM1 4h1v1h-1zM7 4h1v1h-1zM1 5h3v1h-3zM5 5h3v1h-3zM1 6h3v1h-3zM5 6h3v1h-3zM1 7h7v1h-7z"/><path fill="#000" d="M4 2h1v1h-1zM4 3h1v1h-1zM2 4h5v1h-5zM4 5h1v1h-1zM4 6h1v1h-1z"/></svg>
<svg style="left:39px;top:16px" width="16" height="16" shape-rendering="crispEdges"><path fill="#a0a080" d="M5 1h5v1h-5zM4 2h7v1h-7zM3 3h2v1h-2zM10 3h2v1h-2z"/><path fill="#000" d="M2 5h1v1h-1zM5 5h1v1h-1zM8 5h1v1h-1zM11 5h1v1h-1zM2 6h1v1h-1zM8 6h1v1h-1zM11 6h1v1h-1zM7 7h1v1h-1zM3 8h1v1h-1zM11 8h1v1h-1zM4 9h2v1h-2zM7 9h1v1h-1zM9 9h2v1h-2zM6 10h3v1h-3z"/><path fill="#400050" d="M4 11h1v1h-1zM10 11h1v1h-1zM3 12h3v1h-3zM9 12h3v1h-3zM2 13h5v1h-5zM8 13h5v1h-5zM1 14h13v1h-13z"/></svg>
<span class="t" style="left:59px;top:17px;">Саакян Юрий Левонович</span>
<svg style="left:23px;top:36px" width="9" height="9" shape-rendering="crispEdges"><path fill="#808080" d="M0 0h9v1h-9zM0 1h1v1h-1zM8 1h1v1h-1zM0 2h1v1h-1zM8 2h1v1h-1zM0 3h1v1h-1zM8 3h1v1h-1zM0 4h1v1h-1zM8 4h1v1h-1zM0 5h1v1h-1zM8 5h1v1h-1zM0 6h1v1h-1zM8 6h1v1h-1zM0 7h1v1h-1zM8 7h1v1h-1zM0 8h9v1h-9z"/><path fill="#fff" d="M1 1h7v1h-7zM1 2h3v1h-3zM5 2h3v1h-3zM1 3h3v1h-3zM5 3h3v1h-3zM1 4h1v1h-1zM7 4h1v1h-1zM1 5h3v1h-3zM5 5h3v1h-3zM1 6h3v1h-3zM5 6h3v1h-3zM1 7h7v1h-7z"/><path fill="#000" d="M4 2h1v1h-1zM4 3h1v1h-1zM2 4h5v1h-5zM4 5h1v1h-1zM4 6h1v1h-1z"/></svg>
<svg style="left:39px;top:32px" width="16" height="16" shape-rendering="crispEdges"><path fill="#a0a080" d="M5 1h5v1h-5zM4 2h7v1h-7zM3 3h2v1h-2zM10 3h2v1h-2z"/><path fill="#000" d="M2 5h1v1h-1zM5 5h1v1h-1zM8 5h1v1h-1zM11 5h1v1h-1zM2 6h1v1h-1zM8 6h1v1h-1zM11 6h1v1h-1zM7 7h1v1h-1zM3 8h1v1h-1zM11 8h1v1h-1zM4 9h2v1h-2zM7 9h1v1h-1zM9 9h2v1h-2zM6 10h3v1h-3z"/><path fill="#400050" d="M4 11h1v1h-1zM10 11h1v1h-1zM3 12h3v1h-3zM9 12h3v1h-3zM2 13h5v1h-5zM8 13h5v1h-5zM1 14h13v1h-13z"/></svg>
<span class="t" style="left:59px;top:33px;">Абаев Рафаил Александрович</span>
<svg style="left:23px;top:52px" width="9" height="9" shape-rendering="crispEdges"><path fill="#808080" d="M0 0h9v1h-9zM0 1h1v1h-1zM8 1h1v1h-1zM0 2h1v1h-1zM8 2h1v1h-1zM0 3h1v1h-1zM8 3h1v1h-1zM0 4h1v1h-1zM8 4h1v1h-1zM0 5h1v1h-1zM8 5h1v1h-1zM0 6h1v1h-1zM8 6h1v1h-1zM0 7h1v1h-1zM8 7h1v1h-1zM0 8h9v1h-9z"/><path fill="#fff" d="M1 1h7v1h-7zM1 2h7v1h-7zM1 3h7v1h-7zM1 4h1v1h-1zM7 4h1v1h-1zM1 5h7v1h-7zM1 6h7v1h-7zM1 7h7v1h-7z"/><path fill="#000" d="M2 4h5v1h-5z"/></svg>
<svg style="left:39px;top:48px" width="16" height="16" shape-rendering="crispEdges"><path fill="#a0a080" d="M5 1h5v1h-5zM4 2h7v1h-7zM3 3h2v1h-2zM10 3h2v1h-2z"/><path fill="#000" d="M2 5h1v1h-1zM5 5h1v1h-1zM8 5h1v1h-1zM11 5h1v1h-1zM2 6h1v1h-1zM8 6h1v1h-1zM11 6h1v1h-1zM7 7h1v1h-1zM3 8h1v1h-1zM11 8h1v1h-1zM4 9h2v1h-2zM7 9h1v1h-1zM9 9h2v1h-2zM6 10h3v1h-3z"/><path fill="#400050" d="M4 11h1v1h-1zM10 11h1v1h-1zM3 12h3v1h-3zM9 12h3v1h-3zM2 13h5v1h-5zM8 13h5v1h-5zM1 14h13v1h-13z"/></svg>
<span class="t" style="left:59px;top:49px;">Абдрахманов Тагир Булатович</span>
<svg style="left:57px;top:64px" width="16" height="16" shape-rendering="crispEdges"><path fill="#000" d="M4 0h7v1h-7zM4 1h1v1h-1zM10 1h2v1h-2zM4 2h1v1h-1zM10 2h1v1h-1zM12 2h1v1h-1zM4 3h1v1h-1zM10 3h4v1h-4zM4 4h1v1h-1zM13 4h1v1h-1zM4 5h1v1h-1zM13 5h1v1h-1zM4 6h1v1h-1zM13 6h1v1h-1zM2 7h12v1h-12zM1 8h1v1h-1zM14 8h1v1h-1zM0 9h1v1h-1zM15 9h1v1h-1zM0 10h1v1h-1zM12 10h1v1h-1zM15 10h1v1h-1zM0 11h16v1h-16zM0 12h1v1h-1zM15 12h1v1h-1zM0 13h1v1h-1zM15 13h1v1h-1zM1 14h14v1h-14z"/><path fill="#d01020" d="M5 1h5v1h-5zM5 2h5v1h-5zM5 3h5v1h-5zM5 4h8v1h-8zM5 5h8v1h-8zM5 6h8v1h-8z"/><path fill="#fff" d="M11 2h1v1h-1zM1 9h14v1h-14zM1 10h11v1h-11zM13 10h2v1h-2z"/><path fill="#c8c8e0" d="M2 8h12v1h-12z"/><path fill="#a0a0a0" d="M1 12h14v1h-14zM1 13h14v1h-14z"/></svg>
<span class="t" style="left:78px;top:65px;">957 [2007]</span>
<svg style="left:23px;top:84px" width="9" height="9" shape-rendering="crispEdges"><path fill="#808080" d="M0 0h9v1h-9zM0 1h1v1h-1zM8 1h1v1h-1zM0 2h1v1h-1zM8 2h1v1h-1zM0 3h1v1h-1zM8 3h1v1h-1zM0 4h1v1h-1zM8 4h1v1h-1zM0 5h1v1h-1zM8 5h1v1h-1zM0 6h1v1h-1zM8 6h1v1h-1zM0 7h1v1h-1zM8 7h1v1h-1zM0 8h9v1h-9z"/><path fill="#fff" d="M1 1h7v1h-7zM1 2h7v1h-7zM1 3h7v1h-7zM1 4h1v1h-1zM7 4h1v1h-1zM1 5h7v1h-7zM1 6h7v1h-7zM1 7h7v1h-7z"/><path fill="#000" d="M2 4h5v1h-5z"/></svg>
<svg style="left:39px;top:80px" width="16" height="16" shape-rendering="crispEdges"><path fill="#a0a080" d="M5 1h5v1h-5zM4 2h7v1h-7zM3 3h2v1h-2zM10 3h2v1h-2z"/><path fill="#000" d="M2 5h1v1h-1zM5 5h1v1h-1zM8 5h1v1h-1zM11 5h1v1h-1zM2 6h1v1h-1zM8 6h1v1h-1zM11 6h1v1h-1zM7 7h1v1h-1zM3 8h1v1h-1zM11 8h1v1h-1zM4 9h2v1h-2zM7 9h1v1h-1zM9 9h2v1h-2zM6 10h3v1h-3z"/><path fill="#400050" d="M4 11h1v1h-1zM10 11h1v1h-1zM3 12h3v1h-3zM9 12h3v1h-3zM2 13h5v1h-5zM8 13h5v1h-5zM1 14h13v1h-13z"/></svg>
<span class="t" style="left:59px;top:81px;">Абидов Шарапудин Курбанович</span>
<svg style="left:59px;top:96px" width="13" height="16" shape-rendering="crispEdges"><path fill="#000" d="M0 0h9v1h-9zM0 1h1v1h-1zM8 1h2v1h-2zM0 2h1v1h-1zM1 2h1v1h-1zM3 2h1v1h-1zM5 2h1v1h-1zM7 2h1v1h-1zM8 2h1v1h-1zM10 2h1v1h-1zM0 3h1v1h-1zM8 3h1v1h-1zM11 3h1v1h-1zM0 4h1v1h-1zM2 4h1v1h-1zM4 4h1v1h-1zM6 4h1v1h-1zM8 4h5v1h-5zM0 5h1v1h-1zM12 5h1v1h-1zM0 6h1v1h-1zM1 6h1v1h-1zM3 6h1v1h-1zM5 6h1v1h-1zM7 6h1v1h-1zM9 6h1v1h-1zM11 6h1v1h-1zM12 6h1v1h-1zM0 7h1v1h-1zM12 7h1v1h-1zM0 8h1v1h-1zM2 8h1v1h-1zM4 8h1v1h-1zM6 8h1v1h-1zM8 8h1v1h-1zM10 8h1v1h-1zM12 8h1v1h-1zM0 9h1v1h-1zM12 9h1v1h-1zM0 10h1v1h-1zM1 10h1v1h-1zM3 10h1v1h-1zM5 10h1v1h-1zM7 10h1v1h-1zM9 10h1v1h-1zM11 10h1v1h-1zM12 10h1v1h-1zM0 11h1v1h-1zM12 11h1v1h-1zM0 12h1v1h-1zM2 12h1v1h-1zM4 12h1v1h-1zM6 12h1v1h-1zM8 12h1v1h-1zM10 12h1v1h-1zM12 12h1v1h-1zM0 13h1v1h-1zM12 13h1v1h-1zM0 14h1v1h-1zM1 14h1v1h-1zM3 14h1v1h-1zM5 14h1v1h-1zM7 14h1v1h-1zM9 14h1v1h-1zM11 14h1v1h-1zM12 14h1v1h-1zM0 15h13v1h-13z"/><path fill="#fff" d="M1 1h7v1h-7zM2 2h1v1h-1zM4 2h1v1h-1zM6 2h1v1h-1zM9 2h1v1h-1zM1 3h7v1h-7zM9 3h2v1h-2zM1 4h1v1h-1zM3 4h1v1h-1zM5 4h1v1h-1zM7 4h1v1h-1zM1 5h11v1h-11zM2 6h1v1h-1zM4 6h1v1h-1zM6 6h1v1h-1zM8 6h1v1h-1zM10 6h1v1h-1zM1 7h11v1h-11zM1 8h1v1h-1zM3 8h1v1h-1zM5 8h1v1h-1zM7 8h1v1h-1zM9 8h1v1h-1zM11 8h1v1h-1zM1 9h11v1h-11zM2 10h1v1h-1zM4 10h1v1h-1zM6 10h1v1h-1zM8 10h1v1h-1zM10 10h1v1h-1zM1 11h11v1h-11zM1 12h1v1h-1zM3 12h1v1h-1zM5 12h1v1h-1zM7 12h1v1h-1zM9 12h1v1h-1zM11 12h1v1h-1zM1 13h11v1h-11zM2 14h1v1h-1zM4 14h1v1h-1zM6 14h1v1h-1zM8 14h1v1h-1zM10 14h1v1h-1z"/></svg>
<div style="left:76px;top:96px;width:50px;height:16px;background:#d4d0c8"></div>
<span class="t" style="left:78px;top:97px;">64 [2006]</span>
<svg style="left:23px;top:116px" width="9" height="9" shape-rendering="crispEdges"><path fill="#808080" d="M0 0h9v1h-9zM0 1h1v1h-1zM8 1h1v1h-1zM0 2h1v1h-1zM8 2h1v1h-1zM0 3h1v1h-1zM8 3h1v1h-1zM0 4h1v1h-1zM8 4h1v1h-1zM0 5h1v1h-1zM8 5h1v1h-1zM0 6h1v1h-1zM8 6h1v1h-1zM0 7h1v1h-1zM8 7h1v1h-1zM0 8h9v1h-9z"/><path fill="#fff" d="M1 1h7v1h-7zM1 2h3v1h-3zM5 2h3v1h-3zM1 3h3v1h-3zM5 3h3v1h-3zM1 4h1v1h-1zM7 4h1v1h-1zM1 5h3v1h-3zM5 5h3v1h-3zM1 6h3v1h-3zM5 6h3v1h-3zM1 7h7v1h-7z"/><path fill="#000" d="M4 2h1v1h-1zM4 3h1v1h-1zM2 4h5v1h-5zM4 5h1v1h-1zM4 6h1v1h-1z"/></svg>
<svg style="left:39px;top:112px" width="16" height="16" shape-rendering="crispEdges"><path fill="#a0a080" d="M5 1h5v1h-5zM4 2h7v1h-7zM3 3h2v1h-2zM10 3h2v1h-2z"/><path fill="#000" d="M2 5h1v1h-1zM5 5h1v1h-1zM8 5h1v1h-1zM11 5h1v1h-1zM2 6h1v1h-1zM8 6h1v1h-1zM11 6h1v1h-1zM7 7h1v1h-1zM3 8h1v1h-1zM11 8h1v1h-1zM4 9h2v1h-2zM7 9h1v1h-1zM9 9h2v1h-2zM6 10h3v1h-3z"/><path fill="#400050" d="M4 11h1v1h-1zM10 11h1v1h-1zM3 12h3v1h-3zM9 12h3v1h-3zM2 13h5v1h-5zM8 13h5v1h-5zM1 14h13v1h-13z"/></svg>
<span class="t" style="left:59px;top:113px;">Абрадушкин Юрий Викторович</span>
<svg style="left:23px;top:132px" width="9" height="9" shape-rendering="crispEdges"><path fill="#808080" d="M0 0h9v1h-9zM0 1h1v1h-1zM8 1h1v1h-1zM0 2h1v1h-1zM8 2h1v1h-1zM0 3h1v1h-1zM8 3h1v1h-1zM0 4h1v1h-1zM8 4h1v1h-1zM0 5h1v1h-1zM8 5h1v1h-1zM0 6h1v1h-1zM8 6h1v1h-1zM0 7h1v1h-1zM8 7h1v1h-1zM0 8h9v1h-9z"/><path fill="#fff" d="M1 1h7v1h-7zM1 2h3v1h-3zM5 2h3v1h-3zM1 3h3v1h-3zM5 3h3v1h-3zM1 4h1v1h-1zM7 4h1v1h-1zM1 5h3v1h-3zM5 5h3v1h-3zM1 6h3v1h-3zM5 6h3v1h-3zM1 7h7v1h-7z"/><path fill="#000" d="M4 2h1v1h-1zM4 3h1v1h-1zM2 4h5v1h-5zM4 5h1v1h-1zM4 6h1v1h-1z"/></svg>
<svg style="left:39px;top:128px" width="16" height="16" shape-rendering="crispEdges"><path fill="#a0a080" d="M5 1h5v1h-5zM4 2h7v1h-7zM3 3h2v1h-2zM10 3h2v1h-2z"/><path fill="#000" d="M2 5h1v1h-1zM5 5h1v1h-1zM8 5h1v1h-1zM11 5h1v1h-1zM2 6h1v1h-1zM8 6h1v1h-1zM11 6h1v1h-1zM7 7h1v1h-1zM3 8h1v1h-1zM11 8h1v1h-1zM4 9h2v1h-2zM7 9h1v1h-1zM9 9h2v1h-2zM6 10h3v1h-3z"/><path fill="#400050" d="M4 11h1v1h-1zM10 11h1v1h-1zM3 12h3v1h-3zM9 12h3v1h-3zM2 13h5v1h-5zM8 13h5v1h-5zM1 14h13v1h-13z"/></svg>
<span class="t" style="left:59px;top:129px;">Абраменков Сергей Евгеньевич</span>
<svg style="left:23px;top:148px" width="9" height="9" shape-rendering="crispEdges"><path fill="#808080" d="M0 0h9v1h-9zM0 1h1v1h-1zM8 1h1v1h-1zM0 2h1v1h-1zM8 2h1v1h-1zM0 3h1v1h-1zM8 3h1v1h-1zM0 4h1v1h-1zM8 4h1v1h-1zM0 5h1v1h-1zM8 5h1v1h-1zM0 6h1v1h-1zM8 6h1v1h-1zM0 7h1v1h-1zM8 7h1v1h-1zM0 8h9v1h-9z"/><path fill="#fff" d="M1 1h7v1h-7zM1 2h3v1h-3zM5 2h3v1h-3zM1 3h3v1h-3zM5 3h3v1h-3zM1 4h1v1h-1zM7 4h1v1h-1zM1 5h3v1h-3zM5 5h3v1h-3zM1 6h3v1h-3zM5 6h3v1h-3zM1 7h7v1h-7z"/><path fill="#000" d="M4 2h1v1h-1zM4 3h1v1h-1zM2 4h5v1h-5zM4 5h1v1h-1zM4 6h1v1h-1z"/></svg>
<svg style="left:39px;top:144px" width="16" height="16" shape-rendering="crispEdges"><path fill="#a0a080" d="M5 1h5v1h-5zM4 2h7v1h-7zM3 3h2v1h-2zM10 3h2v1h-2z"/><path fill="#000" d="M2 5h1v1h-1zM5 5h1v1h-1zM8 5h1v1h-1zM11 5h1v1h-1zM2 6h1v1h-1zM8 6h1v1h-1zM11 6h1v1h-1zM7 7h1v1h-1zM3 8h1v1h-1zM11 8h1v1h-1zM4 9h2v1h-2zM7 9h1v1h-1zM9 9h2v1h-2zM6 10h3v1h-3z"/><path fill="#400050" d="M4 11h1v1h-1zM10 11h1v1h-1zM3 12h3v1h-3zM9 12h3v1h-3zM2 13h5v1h-5zM8 13h5v1h-5zM1 14h13v1h-13z"/></svg>
<span class="t" style="left:59px;top:145px;">Абрамов Евгений Борисович</span>
<svg style="left:23px;top:164px" width="9" height="9" shape-rendering="crispEdges"><path fill="#808080" d="M0 0h9v1h-9zM0 1h1v1h-1zM8 1h1v1h-1zM0 2h1v1h-1zM8 2h1v1h-1zM0 3h1v1h-1zM8 3h1v1h-1zM0 4h1v1h-1zM8 4h1v1h-1zM0 5h1v1h-1zM8 5h1v1h-1zM0 6h1v1h-1zM8 6h1v1h-1zM0 7h1v1h-1zM8 7h1v1h-1zM0 8h9v1h-9z"/><path fill="#fff" d="M1 1h7v1h-7zM1 2h3v1h-3zM5 2h3v1h-3zM1 3h3v1h-3zM5 3h3v1h-3zM1 4h1v1h-1zM7 4h1v1h-1zM1 5h3v1h-3zM5 5h3v1h-3zM1 6h3v1h-3zM5 6h3v1h-3zM1 7h7v1h-7z"/><path fill="#000" d="M4 2h1v1h-1zM4 3h1v1h-1zM2 4h5v1h-5zM4 5h1v1h-1zM4 6h1v1h-1z"/></svg>
<svg style="left:39px;top:160px" width="16" height="16" shape-rendering="crispEdges"><path fill="#a0a080" d="M5 1h5v1h-5zM4 2h7v1h-7zM3 3h2v1h-2zM10 3h2v1h-2z"/><path fill="#000" d="M2 5h1v1h-1zM5 5h1v1h-1zM8 5h1v1h-1zM11 5h1v1h-1zM2 6h1v1h-1zM8 6h1v1h-1zM11 6h1v1h-1zM7 7h1v1h-1zM3 8h1v1h-1zM11 8h1v1h-1zM4 9h2v1h-2zM7 9h1v1h-1zM9 9h2v1h-2zM6 10h3v1h-3z"/><path fill="#400050" d="M4 11h1v1h-1zM10 11h1v1h-1zM3 12h3v1h-3zM9 12h3v1h-3zM2 13h5v1h-5zM8 13h5v1h-5zM1 14h13v1h-13z"/></svg>
<span class="t" style="left:59px;top:161px;">Абрамов Евгений Борисович</span>
<svg style="left:23px;top:180px" width="9" height="9" shape-rendering="crispEdges"><path fill="#808080" d="M0 0h9v1h-9zM0 1h1v1h-1zM8 1h1v1h-1zM0 2h1v1h-1zM8 2h1v1h-1zM0 3h1v1h-1zM8 3h1v1h-1zM0 4h1v1h-1zM8 4h1v1h-1zM0 5h1v1h-1zM8 5h1v1h-1zM0 6h1v1h-1zM8 6h1v1h-1zM0 7h1v1h-1zM8 7h1v1h-1zM0 8h9v1h-9z"/><path fill="#fff" d="M1 1h7v1h-7zM1 2h3v1h-3zM5 2h3v1h-3zM1 3h3v1h-3zM5 3h3v1h-3zM1 4h1v1h-1zM7 4h1v1h-1zM1 5h3v1h-3zM5 5h3v1h-3zM1 6h3v1h-3zM5 6h3v1h-3zM1 7h7v1h-7z"/><path fill="#000" d="M4 2h1v1h-1zM4 3h1v1h-1zM2 4h5v1h-5zM4 5h1v1h-1zM4 6h1v1h-1z"/></svg>
<svg style="left:39px;top:176px" width="16" height="16" shape-rendering="crispEdges"><path fill="#a0a080" d="M5 1h5v1h-5zM4 2h7v1h-7zM3 3h2v1h-2zM10 3h2v1h-2z"/><path fill="#000" d="M2 5h1v1h-1zM5 5h1v1h-1zM8 5h1v1h-1zM11 5h1v1h-1zM2 6h1v1h-1zM8 6h1v1h-1zM11 6h1v1h-1zM7 7h1v1h-1zM3 8h1v1h-1zM11 8h1v1h-1zM4 9h2v1h-2zM7 9h1v1h-1zM9 9h2v1h-2zM6 10h3v1h-3z"/><path fill="#400050" d="M4 11h1v1h-1zM10 11h1v1h-1zM3 12h3v1h-3zM9 12h3v1h-3zM2 13h5v1h-5zM8 13h5v1h-5zM1 14h13v1h-13z"/></svg>
<span class="t" style="left:59px;top:177px;">Абрамов Николай Алексеевич</span>
<svg style="left:23px;top:196px" width="9" height="9" shape-rendering="crispEdges"><path fill="#808080" d="M0 0h9v1h-9zM0 1h1v1h-1zM8 1h1v1h-1zM0 2h1v1h-1zM8 2h1v1h-1zM0 3h1v1h-1zM8 3h1v1h-1zM0 4h1v1h-1zM8 4h1v1h-1zM0 5h1v1h-1zM8 5h1v1h-1zM0 6h1v1h-1zM8 6h1v1h-1zM0 7h1v1h-1zM8 7h1v1h-1zM0 8h9v1h-9z"/><path fill="#fff" d="M1 1h7v1h-7zM1 2h3v1h-3zM5 2h3v1h-3zM1 3h3v1h-3zM5 3h3v1h-3zM1 4h1v1h-1zM7 4h1v1h-1zM1 5h3v1h-3zM5 5h3v1h-3zM1 6h3v1h-3zM5 6h3v1h-3zM1 7h7v1h-7z"/><path fill="#000" d="M4 2h1v1h-1zM4 3h1v1h-1zM2 4h5v1h-5zM4 5h1v1h-1zM4 6h1v1h-1z"/></svg>
<svg style="left:39px;top:192px" width="16" height="16" shape-rendering="crispEdges"><path fill="#e89070" d="M5 1h5v1h-5zM3 2h4v1h-4zM8 2h4v1h-4zM2 3h3v1h-3zM9 3h4v1h-4zM2 4h2v1h-2zM11 4h2v1h-2zM2 5h2v1h-2zM11 5h2v1h-2zM2 6h2v1h-2zM11 6h2v1h-2zM2 7h2v1h-2zM11 7h2v1h-2zM2 8h3v1h-3zM10 8h3v1h-3zM3 9h2v1h-2zM10 9h2v1h-2z"/><path fill="#c03020" d="M7 2h1v1h-1zM5 3h2v1h-2z"/><path fill="#fff4e8" d="M7 3h2v1h-2zM4 4h7v1h-7zM4 5h1v1h-1zM6 5h3v1h-3zM10 5h1v1h-1zM4 6h7v1h-7zM4 7h3v1h-3zM8 7h3v1h-3zM5 8h5v1h-5zM5 9h5v1h-5zM6 10h3v1h-3z"/><path fill="#104020" d="M5 5h1v1h-1zM9 5h1v1h-1zM2 11h2v1h-2zM11 11h2v1h-2zM1 12h1v1h-1zM4 12h1v1h-1zM10 12h1v1h-1zM13 12h1v1h-1zM0 13h1v1h-1zM5 13h1v1h-1zM9 13h1v1h-1zM14 13h1v1h-1zM6 14h3v1h-3z"/><path fill="#c04060" d="M7 7h1v1h-1z"/><path fill="#60d0a0" d="M2 12h2v1h-2zM11 12h2v1h-2zM1 13h4v1h-4zM10 13h4v1h-4zM0 14h6v1h-6zM9 14h6v1h-6zM0 15h15v1h-15z"/></svg>
<span class="t" style="left:59px;top:193px;">Абрамова Ранулия Сергеевна</span>
<svg style="left:23px;top:212px" width="9" height="9" shape-rendering="crispEdges"><path fill="#808080" d="M0 0h9v1h-9zM0 1h1v1h-1zM8 1h1v1h-1zM0 2h1v1h-1zM8 2h1v1h-1zM0 3h1v1h-1zM8 3h1v1h-1zM0 4h1v1h-1zM8 4h1v1h-1zM0 5h1v1h-1zM8 5h1v1h-1zM0 6h1v1h-1zM8 6h1v1h-1zM0 7h1v1h-1zM8 7h1v1h-1zM0 8h9v1h-9z"/><path fill="#fff" d="M1 1h7v1h-7zM1 2h3v1h-3zM5 2h3v1h-3zM1 3h3v1h-3zM5 3h3v1h-3zM1 4h1v1h-1zM7 4h1v1h-1zM1 5h3v1h-3zM5 5h3v1h-3zM1 6h3v1h-3zM5 6h3v1h-3zM1 7h7v1h-7z"/><path fill="#000" d="M4 2h1v1h-1zM4 3h1v1h-1zM2 4h5v1h-5zM4 5h1v1h-1zM4 6h1v1h-1z"/></svg>
<svg style="left:39px;top:208px" width="16" height="16" shape-rendering="crispEdges"><path fill="#a0a080" d="M5 1h5v1h-5zM4 2h7v1h-7zM3 3h2v1h-2zM10 3h2v1h-2z"/><path fill="#000" d="M2 5h1v1h-1zM5 5h1v1h-1zM8 5h1v1h-1zM11 5h1v1h-1zM2 6h1v1h-1zM8 6h1v1h-1zM11 6h1v1h-1zM7 7h1v1h-1zM3 8h1v1h-1zM11 8h1v1h-1zM4 9h2v1h-2zM7 9h1v1h-1zM9 9h2v1h-2zM6 10h3v1h-3z"/><path fill="#400050" d="M4 11h1v1h-1zM10 11h1v1h-1zM3 12h3v1h-3zM9 12h3v1h-3zM2 13h5v1h-5zM8 13h5v1h-5zM1 14h13v1h-13z"/></svg>
<span class="t" style="left:59px;top:209px;">Авдеев Михаил Борисович</span>
<svg style="left:23px;top:228px" width="9" height="9" shape-rendering="crispEdges"><path fill="#808080" d="M0 0h9v1h-9zM0 1h1v1h-1zM8 1h1v1h-1zM0 2h1v1h-1zM8 2h1v1h-1zM0 3h1v1h-1zM8 3h1v1h-1zM0 4h1v1h-1zM8 4h1v1h-1zM0 5h1v1h-1zM8 5h1v1h-1zM0 6h1v1h-1zM8 6h1v1h-1zM0 7h1v1h-1zM8 7h1v1h-1zM0 8h9v1h-9z"/><path fill="#fff" d="M1 1h7v1h-7zM1 2h3v1h-3zM5 2h3v1h-3zM1 3h3v1h-3zM5 3h3v1h-3zM1 4h1v1h-1zM7 4h1v1h-1zM1 5h3v1h-3zM5 5h3v1h-3zM1 6h3v1h-3zM5 6h3v1h-3zM1 7h7v1h-7z"/><path fill="#000" d="M4 2h1v1h-1zM4 3h1v1h-1zM2 4h5v1h-5zM4 5h1v1h-1zM4 6h1v1h-1z"/></svg>
<svg style="left:39px;top:224px" width="16" height="16" shape-rendering="crispEdges"><path fill="#a0a080" d="M5 1h5v1h-5zM4 2h7v1h-7zM3 3h2v1h-2zM10 3h2v1h-2z"/><path fill="#000" d="M2 5h1v1h-1zM5 5h1v1h-1zM8 5h1v1h-1zM11 5h1v1h-1zM2 6h1v1h-1zM8 6h1v1h-1zM11 6h1v1h-1zM7 7h1v1h-1zM3 8h1v1h-1zM11 8h1v1h-1zM4 9h2v1h-2zM7 9h1v1h-1zM9 9h2v1h-2zM6 10h3v1h-3z"/><path fill="#400050" d="M4 11h1v1h-1zM10 11h1v1h-1zM3 12h3v1h-3zM9 12h3v1h-3zM2 13h5v1h-5zM8 13h5v1h-5zM1 14h13v1h-13z"/></svg>
<span class="t" style="left:59px;top:225px;">Авдеев Сергей Юрьевич</span>
<svg style="left:23px;top:244px" width="9" height="9" shape-rendering="crispEdges"><path fill="#808080" d="M0 0h9v1h-9zM0 1h1v1h-1zM8 1h1v1h-1zM0 2h1v1h-1zM8 2h1v1h-1zM0 3h1v1h-1zM8 3h1v1h-1zM0 4h1v1h-1zM8 4h1v1h-1zM0 5h1v1h-1zM8 5h1v1h-1zM0 6h1v1h-1zM8 6h1v1h-1zM0 7h1v1h-1zM8 7h1v1h-1zM0 8h9v1h-9z"/><path fill="#fff" d="M1 1h7v1h-7zM1 2h3v1h-3zM5 2h3v1h-3zM1 3h3v1h-3zM5 3h3v1h-3zM1 4h1v1h-1zM7 4h1v1h-1zM1 5h3v1h-3zM5 5h3v1h-3zM1 6h3v1h-3zM5 6h3v1h-3zM1 7h7v1h-7z"/><path fill="#000" d="M4 2h1v1h-1zM4 3h1v1h-1zM2 4h5v1h-5zM4 5h1v1h-1zM4 6h1v1h-1z"/></svg>
<svg style="left:39px;top:240px" width="16" height="16" shape-rendering="crispEdges"><path fill="#e89070" d="M5 1h5v1h-5zM3 2h4v1h-4zM8 2h4v1h-4zM2 3h3v1h-3zM9 3h4v1h-4zM2 4h2v1h-2zM11 4h2v1h-2zM2 5h2v1h-2zM11 5h2v1h-2zM2 6h2v1h-2zM11 6h2v1h-2zM2 7h2v1h-2zM11 7h2v1h-2zM2 8h3v1h-3zM10 8h3v1h-3zM3 9h2v1h-2zM10 9h2v1h-2z"/><path fill="#c03020" d="M7 2h1v1h-1zM5 3h2v1h-2z"/><path fill="#fff4e8" d="M7 3h2v1h-2zM4 4h7v1h-7zM4 5h1v1h-1zM6 5h3v1h-3zM10 5h1v1h-1zM4 6h7v1h-7zM4 7h3v1h-3zM8 7h3v1h-3zM5 8h5v1h-5zM5 9h5v1h-5zM6 10h3v1h-3z"/><path fill="#104020" d="M5 5h1v1h-1zM9 5h1v1h-1zM2 11h2v1h-2zM11 11h2v1h-2zM1 12h1v1h-1zM4 12h1v1h-1zM10 12h1v1h-1zM13 12h1v1h-1zM0 13h1v1h-1zM5 13h1v1h-1zM9 13h1v1h-1zM14 13h1v1h-1zM6 14h3v1h-3z"/><path fill="#c04060" d="M7 7h1v1h-1z"/><path fill="#60d0a0" d="M2 12h2v1h-2zM11 12h2v1h-2zM1 13h4v1h-4zM10 13h4v1h-4zM0 14h6v1h-6zM9 14h6v1h-6zM0 15h15v1h-15z"/></svg>
<span class="t" style="left:59px;top:241px;">Авдеева Зинаида Платоновна</span>
<svg style="left:23px;top:260px" width="9" height="9" shape-rendering="crispEdges"><path fill="#808080" d="M0 0h9v1h-9zM0 1h1v1h-1zM8 1h1v1h-1zM0 2h1v1h-1zM8 2h1v1h-1zM0 3h1v1h-1zM8 3h1v1h-1zM0 4h1v1h-1zM8 4h1v1h-1zM0 5h1v1h-1zM8 5h1v1h-1zM0 6h1v1h-1zM8 6h1v1h-1zM0 7h1v1h-1zM8 7h1v1h-1zM0 8h9v1h-9z"/><path fill="#fff" d="M1 1h7v1h-7zM1 2h3v1h-3zM5 2h3v1h-3zM1 3h3v1h-3zM5 3h3v1h-3zM1 4h1v1h-1zM7 4h1v1h-1zM1 5h3v1h-3zM5 5h3v1h-3zM1 6h3v1h-3zM5 6h3v1h-3zM1 7h7v1h-7z"/><path fill="#000" d="M4 2h1v1h-1zM4 3h1v1h-1zM2 4h5v1h-5zM4 5h1v1h-1zM4 6h1v1h-1z"/></svg>
<svg style="left:39px;top:256px" width="16" height="16" shape-rendering="crispEdges"><path fill="#a0a080" d="M5 1h5v1h-5zM4 2h7v1h-7zM3 3h2v1h-2zM10 3h2v1h-2z"/><path fill="#000" d="M2 5h1v1h-1zM5 5h1v1h-1zM8 5h1v1h-1zM11 5h1v1h-1zM2 6h1v1h-1zM8 6h1v1h-1zM11 6h1v1h-1zM7 7h1v1h-1zM3 8h1v1h-1zM11 8h1v1h-1zM4 9h2v1h-2zM7 9h1v1h-1zM9 9h2v1h-2zM6 10h3v1h-3z"/><path fill="#400050" d="M4 11h1v1h-1zM10 11h1v1h-1zM3 12h3v1h-3zM9 12h3v1h-3zM2 13h5v1h-5zM8 13h5v1h-5zM1 14h13v1h-13z"/></svg>
<span class="t" style="left:59px;top:257px;">Авдушев Виктор Васильевич</span>
<svg style="left:23px;top:276px" width="9" height="9" shape-rendering="crispEdges"><path fill="#808080" d="M0 0h9v1h-9zM0 1h1v1h-1zM8 1h1v1h-1zM0 2h1v1h-1zM8 2h1v1h-1zM0 3h1v1h-1zM8 3h1v1h-1zM0 4h1v1h-1zM8 4h1v1h-1zM0 5h1v1h-1zM8 5h1v1h-1zM0 6h1v1h-1zM8 6h1v1h-1zM0 7h1v1h-1zM8 7h1v1h-1zM0 8h9v1h-9z"/><path fill="#fff" d="M1 1h7v1h-7zM1 2h3v1h-3zM5 2h3v1h-3zM1 3h3v1h-3zM5 3h3v1h-3zM1 4h1v1h-1zM7 4h1v1h-1zM1 5h3v1h-3zM5 5h3v1h-3zM1 6h3v1h-3zM5 6h3v1h-3zM1 7h7v1h-7z"/><path fill="#000" d="M4 2h1v1h-1zM4 3h1v1h-1zM2 4h5v1h-5zM4 5h1v1h-1zM4 6h1v1h-1z"/></svg>
<svg style="left:39px;top:272px" width="16" height="16" shape-rendering="crispEdges"><path fill="#a0a080" d="M5 1h5v1h-5zM4 2h7v1h-7zM3 3h2v1h-2zM10 3h2v1h-2z"/><path fill="#000" d="M2 5h1v1h-1zM5 5h1v1h-1zM8 5h1v1h-1zM11 5h1v1h-1zM2 6h1v1h-1zM8 6h1v1h-1zM11 6h1v1h-1zM7 7h1v1h-1zM3 8h1v1h-1zM11 8h1v1h-1zM4 9h2v1h-2zM7 9h1v1h-1zM9 9h2v1h-2zM6 10h3v1h-3z"/><path fill="#400050" d="M4 11h1v1h-1zM10 11h1v1h-1zM3 12h3v1h-3zM9 12h3v1h-3zM2 13h5v1h-5zM8 13h5v1h-5zM1 14h13v1h-13z"/></svg>
<span class="t" style="left:59px;top:273px;">Аверкиев Станислав Федорович</span>
<svg style="left:23px;top:292px" width="9" height="9" shape-rendering="crispEdges"><path fill="#808080" d="M0 0h9v1h-9zM0 1h1v1h-1zM8 1h1v1h-1zM0 2h1v1h-1zM8 2h1v1h-1zM0 3h1v1h-1zM8 3h1v1h-1zM0 4h1v1h-1zM8 4h1v1h-1zM0 5h1v1h-1zM8 5h1v1h-1zM0 6h1v1h-1zM8 6h1v1h-1zM0 7h1v1h-1zM8 7h1v1h-1zM0 8h9v1h-9z"/><path fill="#fff" d="M1 1h7v1h-7zM1 2h3v1h-3zM5 2h3v1h-3zM1 3h3v1h-3zM5 3h3v1h-3zM1 4h1v1h-1zM7 4h1v1h-1zM1 5h3v1h-3zM5 5h3v1h-3zM1 6h3v1h-3zM5 6h3v1h-3zM1 7h7v1h-7z"/><path fill="#000" d="M4 2h1v1h-1zM4 3h1v1h-1zM2 4h5v1h-5zM4 5h1v1h-1zM4 6h1v1h-1z"/></svg>
<svg style="left:39px;top:288px" width="16" height="16" shape-rendering="crispEdges"><path fill="#a0a080" d="M5 1h5v1h-5zM4 2h7v1h-7zM3 3h2v1h-2zM10 3h2v1h-2z"/><path fill="#000" d="M2 5h1v1h-1zM5 5h1v1h-1zM8 5h1v1h-1zM11 5h1v1h-1zM2 6h1v1h-1zM8 6h1v1h-1zM11 6h1v1h-1zM7 7h1v1h-1zM3 8h1v1h-1zM11 8h1v1h-1zM4 9h2v1h-2zM7 9h1v1h-1zM9 9h2v1h-2zM6 10h3v1h-3z"/><path fill="#400050" d="M4 11h1v1h-1zM10 11h1v1h-1zM3 12h3v1h-3zM9 12h3v1h-3zM2 13h5v1h-5zM8 13h5v1h-5zM1 14h13v1h-13z"/></svg>
<span class="t" style="left:59px;top:289px;">Аверкиев Станислав Федорович</span>
<svg style="left:23px;top:308px" width="9" height="9" shape-rendering="crispEdges"><path fill="#808080" d="M0 0h9v1h-9zM0 1h1v1h-1zM8 1h1v1h-1zM0 2h1v1h-1zM8 2h1v1h-1zM0 3h1v1h-1zM8 3h1v1h-1zM0 4h1v1h-1zM8 4h1v1h-1zM0 5h1v1h-1zM8 5h1v1h-1zM0 6h1v1h-1zM8 6h1v1h-1zM0 7h1v1h-1zM8 7h1v1h-1zM0 8h9v1h-9z"/><path fill="#fff" d="M1 1h7v1h-7zM1 2h3v1h-3zM5 2h3v1h-3zM1 3h3v1h-3zM5 3h3v1h-3zM1 4h1v1h-1zM7 4h1v1h-1zM1 5h3v1h-3zM5 5h3v1h-3zM1 6h3v1h-3zM5 6h3v1h-3zM1 7h7v1h-7z"/><path fill="#000" d="M4 2h1v1h-1zM4 3h1v1h-1zM2 4h5v1h-5zM4 5h1v1h-1zM4 6h1v1h-1z"/></svg>
<svg style="left:39px;top:304px" width="16" height="16" shape-rendering="crispEdges"><path fill="#a0a080" d="M5 1h5v1h-5zM4 2h7v1h-7zM3 3h2v1h-2zM10 3h2v1h-2z"/><path fill="#000" d="M2 5h1v1h-1zM5 5h1v1h-1zM8 5h1v1h-1zM11 5h1v1h-1zM2 6h1v1h-1zM8 6h1v1h-1zM11 6h1v1h-1zM7 7h1v1h-1zM3 8h1v1h-1zM11 8h1v1h-1zM4 9h2v1h-2zM7 9h1v1h-1zM9 9h2v1h-2zM6 10h3v1h-3z"/><path fill="#400050" d="M4 11h1v1h-1zM10 11h1v1h-1zM3 12h3v1h-3zM9 12h3v1h-3zM2 13h5v1h-5zM8 13h5v1h-5zM1 14h13v1h-13z"/></svg>
<span class="t" style="left:59px;top:305px;">Аверкиева Станислав Федоровна</span>
<svg style="left:23px;top:324px" width="9" height="9" shape-rendering="crispEdges"><path fill="#808080" d="M0 0h9v1h-9zM0 1h1v1h-1zM8 1h1v1h-1zM0 2h1v1h-1zM8 2h1v1h-1zM0 3h1v1h-1zM8 3h1v1h-1zM0 4h1v1h-1zM8 4h1v1h-1zM0 5h1v1h-1zM8 5h1v1h-1zM0 6h1v1h-1zM8 6h1v1h-1zM0 7h1v1h-1zM8 7h1v1h-1zM0 8h9v1h-9z"/><path fill="#fff" d="M1 1h7v1h-7zM1 2h3v1h-3zM5 2h3v1h-3zM1 3h3v1h-3zM5 3h3v1h-3zM1 4h1v1h-1zM7 4h1v1h-1zM1 5h3v1h-3zM5 5h3v1h-3zM1 6h3v1h-3zM5 6h3v1h-3zM1 7h7v1h-7z"/><path fill="#000" d="M4 2h1v1h-1zM4 3h1v1h-1zM2 4h5v1h-5zM4 5h1v1h-1zM4 6h1v1h-1z"/></svg>
<svg style="left:39px;top:320px" width="16" height="16" shape-rendering="crispEdges"><path fill="#e89070" d="M5 1h5v1h-5zM3 2h4v1h-4zM8 2h4v1h-4zM2 3h3v1h-3zM9 3h4v1h-4zM2 4h2v1h-2zM11 4h2v1h-2zM2 5h2v1h-2zM11 5h2v1h-2zM2 6h2v1h-2zM11 6h2v1h-2zM2 7h2v1h-2zM11 7h2v1h-2zM2 8h3v1h-3zM10 8h3v1h-3zM3 9h2v1h-2zM10 9h2v1h-2z"/><path fill="#c03020" d="M7 2h1v1h-1zM5 3h2v1h-2z"/><path fill="#fff4e8" d="M7 3h2v1h-2zM4 4h7v1h-7zM4 5h1v1h-1zM6 5h3v1h-3zM10 5h1v1h-1zM4 6h7v1h-7zM4 7h3v1h-3zM8 7h3v1h-3zM5 8h5v1h-5zM5 9h5v1h-5zM6 10h3v1h-3z"/><path fill="#104020" d="M5 5h1v1h-1zM9 5h1v1h-1zM2 11h2v1h-2zM11 11h2v1h-2zM1 12h1v1h-1zM4 12h1v1h-1zM10 12h1v1h-1zM13 12h1v1h-1zM0 13h1v1h-1zM5 13h1v1h-1zM9 13h1v1h-1zM14 13h1v1h-1zM6 14h3v1h-3z"/><path fill="#c04060" d="M7 7h1v1h-1z"/><path fill="#60d0a0" d="M2 12h2v1h-2zM11 12h2v1h-2zM1 13h4v1h-4zM10 13h4v1h-4zM0 14h6v1h-6zM9 14h6v1h-6zM0 15h15v1h-15z"/></svg>
<span class="t" style="left:59px;top:321px;">Аверьянова Жанна Геннадьевна</span>
<svg style="left:23px;top:340px" width="9" height="9" shape-rendering="crispEdges"><path fill="#808080" d="M0 0h9v1h-9zM0 1h1v1h-1zM8 1h1v1h-1zM0 2h1v1h-1zM8 2h1v1h-1zM0 3h1v1h-1zM8 3h1v1h-1zM0 4h1v1h-1zM8 4h1v1h-1zM0 5h1v1h-1zM8 5h1v1h-1zM0 6h1v1h-1zM8 6h1v1h-1zM0 7h1v1h-1zM8 7h1v1h-1zM0 8h9v1h-9z"/><path fill="#fff" d="M1 1h7v1h-7zM1 2h3v1h-3zM5 2h3v1h-3zM1 3h3v1h-3zM5 3h3v1h-3zM1 4h1v1h-1zM7 4h1v1h-1zM1 5h3v1h-3zM5 5h3v1h-3zM1 6h3v1h-3zM5 6h3v1h-3zM1 7h7v1h-7z"/><path fill="#000" d="M4 2h1v1h-1zM4 3h1v1h-1zM2 4h5v1h-5zM4 5h1v1h-1zM4 6h1v1h-1z"/></svg>
<svg style="left:39px;top:336px" width="16" height="16" shape-rendering="crispEdges"><path fill="#e89070" d="M5 1h5v1h-5zM3 2h4v1h-4zM8 2h4v1h-4zM2 3h3v1h-3zM9 3h4v1h-4zM2 4h2v1h-2zM11 4h2v1h-2zM2 5h2v1h-2zM11 5h2v1h-2zM2 6h2v1h-2zM11 6h2v1h-2zM2 7h2v1h-2zM11 7h2v1h-2zM2 8h3v1h-3zM10 8h3v1h-3zM3 9h2v1h-2zM10 9h2v1h-2z"/><path fill="#c03020" d="M7 2h1v1h-1zM5 3h2v1h-2z"/><path fill="#fff4e8" d="M7 3h2v1h-2zM4 4h7v1h-7zM4 5h1v1h-1zM6 5h3v1h-3zM10 5h1v1h-1zM4 6h7v1h-7zM4 7h3v1h-3zM8 7h3v1h-3zM5 8h5v1h-5zM5 9h5v1h-5zM6 10h3v1h-3z"/><path fill="#104020" d="M5 5h1v1h-1zM9 5h1v1h-1zM2 11h2v1h-2zM11 11h2v1h-2zM1 12h1v1h-1zM4 12h1v1h-1zM10 12h1v1h-1zM13 12h1v1h-1zM0 13h1v1h-1zM5 13h1v1h-1zM9 13h1v1h-1zM14 13h1v1h-1zM6 14h3v1h-3z"/><path fill="#c04060" d="M7 7h1v1h-1z"/><path fill="#60d0a0" d="M2 12h2v1h-2zM11 12h2v1h-2zM1 13h4v1h-4zM10 13h4v1h-4zM0 14h6v1h-6zM9 14h6v1h-6zM0 15h15v1h-15z"/></svg>
<span class="t" style="left:59px;top:337px;">Авзалетдинова Маргарита Ахлямовна</span>
<svg style="left:23px;top:356px" width="9" height="9" shape-rendering="crispEdges"><path fill="#808080" d="M0 0h9v1h-9zM0 1h1v1h-1zM8 1h1v1h-1zM0 2h1v1h-1zM8 2h1v1h-1zM0 3h1v1h-1zM8 3h1v1h-1zM0 4h1v1h-1zM8 4h1v1h-1zM0 5h1v1h-1zM8 5h1v1h-1zM0 6h1v1h-1zM8 6h1v1h-1zM0 7h1v1h-1zM8 7h1v1h-1zM0 8h9v1h-9z"/><path fill="#fff" d="M1 1h7v1h-7zM1 2h3v1h-3zM5 2h3v1h-3zM1 3h3v1h-3zM5 3h3v1h-3zM1 4h1v1h-1zM7 4h1v1h-1zM1 5h3v1h-3zM5 5h3v1h-3zM1 6h3v1h-3zM5 6h3v1h-3zM1 7h7v1h-7z"/><path fill="#000" d="M4 2h1v1h-1zM4 3h1v1h-1zM2 4h5v1h-5zM4 5h1v1h-1zM4 6h1v1h-1z"/></svg>
<svg style="left:39px;top:352px" width="16" height="16" shape-rendering="crispEdges"><path fill="#a0a080" d="M5 1h5v1h-5zM4 2h7v1h-7zM3 3h2v1h-2zM10 3h2v1h-2z"/><path fill="#000" d="M2 5h1v1h-1zM5 5h1v1h-1zM8 5h1v1h-1zM11 5h1v1h-1zM2 6h1v1h-1zM8 6h1v1h-1zM11 6h1v1h-1zM7 7h1v1h-1zM3 8h1v1h-1zM11 8h1v1h-1zM4 9h2v1h-2zM7 9h1v1h-1zM9 9h2v1h-2zM6 10h3v1h-3z"/><path fill="#400050" d="M4 11h1v1h-1zM10 11h1v1h-1zM3 12h3v1h-3zM9 12h3v1h-3zM2 13h5v1h-5zM8 13h5v1h-5zM1 14h13v1h-13z"/></svg>
<span class="t" style="left:59px;top:353px;">Агалаков Виктор Николаевич</span>
<svg style="left:23px;top:372px" width="9" height="9" shape-rendering="crispEdges"><path fill="#808080" d="M0 0h9v1h-9zM0 1h1v1h-1zM8 1h1v1h-1zM0 2h1v1h-1zM8 2h1v1h-1zM0 3h1v1h-1zM8 3h1v1h-1zM0 4h1v1h-1zM8 4h1v1h-1zM0 5h1v1h-1zM8 5h1v1h-1zM0 6h1v1h-1zM8 6h1v1h-1zM0 7h1v1h-1zM8 7h1v1h-1zM0 8h9v1h-9z"/><path fill="#fff" d="M1 1h7v1h-7zM1 2h3v1h-3zM5 2h3v1h-3zM1 3h3v1h-3zM5 3h3v1h-3zM1 4h1v1h-1zM7 4h1v1h-1zM1 5h3v1h-3zM5 5h3v1h-3zM1 6h3v1h-3zM5 6h3v1h-3zM1 7h7v1h-7z"/><path fill="#000" d="M4 2h1v1h-1zM4 3h1v1h-1zM2 4h5v1h-5zM4 5h1v1h-1zM4 6h1v1h-1z"/></svg>
<svg style="left:39px;top:368px" width="16" height="16" shape-rendering="crispEdges"><path fill="#a0a080" d="M5 1h5v1h-5zM4 2h7v1h-7zM3 3h2v1h-2zM10 3h2v1h-2z"/><path fill="#000" d="M2 5h1v1h-1zM5 5h1v1h-1zM8 5h1v1h-1zM11 5h1v1h-1zM2 6h1v1h-1zM8 6h1v1h-1zM11 6h1v1h-1zM7 7h1v1h-1zM3 8h1v1h-1zM11 8h1v1h-1zM4 9h2v1h-2zM7 9h1v1h-1zM9 9h2v1h-2zM6 10h3v1h-3z"/><path fill="#400050" d="M4 11h1v1h-1zM10 11h1v1h-1zM3 12h3v1h-3zM9 12h3v1h-3zM2 13h5v1h-5zM8 13h5v1h-5zM1 14h13v1h-13z"/></svg>
<span class="t" style="left:59px;top:369px;">Агапов Владимир Николаевич</span>
<svg style="left:23px;top:388px" width="9" height="9" shape-rendering="crispEdges"><path fill="#808080" d="M0 0h9v1h-9zM0 1h1v1h-1zM8 1h1v1h-1zM0 2h1v1h-1zM8 2h1v1h-1zM0 3h1v1h-1zM8 3h1v1h-1zM0 4h1v1h-1zM8 4h1v1h-1zM0 5h1v1h-1zM8 5h1v1h-1zM0 6h1v1h-1zM8 6h1v1h-1zM0 7h1v1h-1zM8 7h1v1h-1zM0 8h9v1h-9z"/><path fill="#fff" d="M1 1h7v1h-7zM1 2h3v1h-3zM5 2h3v1h-3zM1 3h3v1h-3zM5 3h3v1h-3zM1 4h1v1h-1zM7 4h1v1h-1zM1 5h3v1h-3zM5 5h3v1h-3zM1 6h3v1h-3zM5 6h3v1h-3zM1 7h7v1h-7z"/><path fill="#000" d="M4 2h1v1h-1zM4 3h1v1h-1zM2 4h5v1h-5zM4 5h1v1h-1zM4 6h1v1h-1z"/></svg>
<svg style="left:39px;top:384px" width="16" height="16" shape-rendering="crispEdges"><path fill="#e89070" d="M5 1h5v1h-5zM3 2h4v1h-4zM8 2h4v1h-4zM2 3h3v1h-3zM9 3h4v1h-4zM2 4h2v1h-2zM11 4h2v1h-2zM2 5h2v1h-2zM11 5h2v1h-2zM2 6h2v1h-2zM11 6h2v1h-2zM2 7h2v1h-2zM11 7h2v1h-2zM2 8h3v1h-3zM10 8h3v1h-3zM3 9h2v1h-2zM10 9h2v1h-2z"/><path fill="#c03020" d="M7 2h1v1h-1zM5 3h2v1h-2z"/><path fill="#fff4e8" d="M7 3h2v1h-2zM4 4h7v1h-7zM4 5h1v1h-1zM6 5h3v1h-3zM10 5h1v1h-1zM4 6h7v1h-7zM4 7h3v1h-3zM8 7h3v1h-3zM5 8h5v1h-5zM5 9h5v1h-5zM6 10h3v1h-3z"/><path fill="#104020" d="M5 5h1v1h-1zM9 5h1v1h-1zM2 11h2v1h-2zM11 11h2v1h-2zM1 12h1v1h-1zM4 12h1v1h-1zM10 12h1v1h-1zM13 12h1v1h-1zM0 13h1v1h-1zM5 13h1v1h-1zM9 13h1v1h-1zM14 13h1v1h-1zM6 14h3v1h-3z"/><path fill="#c04060" d="M7 7h1v1h-1z"/><path fill="#60d0a0" d="M2 12h2v1h-2zM11 12h2v1h-2zM1 13h4v1h-4zM10 13h4v1h-4zM0 14h6v1h-6zM9 14h6v1h-6zM0 15h15v1h-15z"/></svg>
<span class="t" style="left:59px;top:385px;">Агеенко Флоренция Леонидовна</span>
<svg style="left:23px;top:404px" width="9" height="9" shape-rendering="crispEdges"><path fill="#808080" d="M0 0h9v1h-9zM0 1h1v1h-1zM8 1h1v1h-1zM0 2h1v1h-1zM8 2h1v1h-1zM0 3h1v1h-1zM8 3h1v1h-1zM0 4h1v1h-1zM8 4h1v1h-1zM0 5h1v1h-1zM8 5h1v1h-1zM0 6h1v1h-1zM8 6h1v1h-1zM0 7h1v1h-1zM8 7h1v1h-1zM0 8h9v1h-9z"/><path fill="#fff" d="M1 1h7v1h-7zM1 2h3v1h-3zM5 2h3v1h-3zM1 3h3v1h-3zM5 3h3v1h-3zM1 4h1v1h-1zM7 4h1v1h-1zM1 5h3v1h-3zM5 5h3v1h-3zM1 6h3v1h-3zM5 6h3v1h-3zM1 7h7v1h-7z"/><path fill="#000" d="M4 2h1v1h-1zM4 3h1v1h-1zM2 4h5v1h-5zM4 5h1v1h-1zM4 6h1v1h-1z"/></svg>
<svg style="left:39px;top:400px" width="16" height="16" shape-rendering="crispEdges"><path fill="#e89070" d="M5 1h5v1h-5zM3 2h4v1h-4zM8 2h4v1h-4zM2 3h3v1h-3zM9 3h4v1h-4zM2 4h2v1h-2zM11 4h2v1h-2zM2 5h2v1h-2zM11 5h2v1h-2zM2 6h2v1h-2zM11 6h2v1h-2zM2 7h2v1h-2zM11 7h2v1h-2zM2 8h3v1h-3zM10 8h3v1h-3zM3 9h2v1h-2zM10 9h2v1h-2z"/><path fill="#c03020" d="M7 2h1v1h-1zM5 3h2v1h-2z"/><path fill="#fff4e8" d="M7 3h2v1h-2zM4 4h7v1h-7zM4 5h1v1h-1zM6 5h3v1h-3zM10 5h1v1h-1zM4 6h7v1h-7zM4 7h3v1h-3zM8 7h3v1h-3zM5 8h5v1h-5zM5 9h5v1h-5zM6 10h3v1h-3z"/><path fill="#104020" d="M5 5h1v1h-1zM9 5h1v1h-1zM2 11h2v1h-2zM11 11h2v1h-2zM1 12h1v1h-1zM4 12h1v1h-1zM10 12h1v1h-1zM13 12h1v1h-1zM0 13h1v1h-1zM5 13h1v1h-1zM9 13h1v1h-1zM14 13h1v1h-1zM6 14h3v1h-3z"/><path fill="#c04060" d="M7 7h1v1h-1z"/><path fill="#60d0a0" d="M2 12h2v1h-2zM11 12h2v1h-2zM1 13h4v1h-4zM10 13h4v1h-4zM0 14h6v1h-6zM9 14h6v1h-6zM0 15h15v1h-15z"/></svg>
<span class="t" style="left:59px;top:401px;">Агеенко Флоренция Леонидовна</span>
<svg style="left:23px;top:420px" width="9" height="9" shape-rendering="crispEdges"><path fill="#808080" d="M0 0h9v1h-9zM0 1h1v1h-1zM8 1h1v1h-1zM0 2h1v1h-1zM8 2h1v1h-1zM0 3h1v1h-1zM8 3h1v1h-1zM0 4h1v1h-1zM8 4h1v1h-1zM0 5h1v1h-1zM8 5h1v1h-1zM0 6h1v1h-1zM8 6h1v1h-1zM0 7h1v1h-1zM8 7h1v1h-1zM0 8h9v1h-9z"/><path fill="#fff" d="M1 1h7v1h-7zM1 2h3v1h-3zM5 2h3v1h-3zM1 3h3v1h-3zM5 3h3v1h-3zM1 4h1v1h-1zM7 4h1v1h-1zM1 5h3v1h-3zM5 5h3v1h-3zM1 6h3v1h-3zM5 6h3v1h-3zM1 7h7v1h-7z"/><path fill="#000" d="M4 2h1v1h-1zM4 3h1v1h-1zM2 4h5v1h-5zM4 5h1v1h-1zM4 6h1v1h-1z"/></svg>
<svg style="left:39px;top:416px" width="16" height="16" shape-rendering="crispEdges"><path fill="#a0a080" d="M5 1h5v1h-5zM4 2h7v1h-7zM3 3h2v1h-2zM10 3h2v1h-2z"/><path fill="#000" d="M2 5h1v1h-1zM5 5h1v1h-1zM8 5h1v1h-1zM11 5h1v1h-1zM2 6h1v1h-1zM8 6h1v1h-1zM11 6h1v1h-1zM7 7h1v1h-1zM3 8h1v1h-1zM11 8h1v1h-1zM4 9h2v1h-2zM7 9h1v1h-1zM9 9h2v1h-2zM6 10h3v1h-3z"/><path fill="#400050" d="M4 11h1v1h-1zM10 11h1v1h-1zM3 12h3v1h-3zM9 12h3v1h-3zM2 13h5v1h-5zM8 13h5v1h-5zM1 14h13v1h-13z"/></svg>
<span class="t" style="left:59px;top:417px;">Азаров Николай Евгеньевич</span>
<svg style="left:23px;top:436px" width="9" height="9" shape-rendering="crispEdges"><path fill="#808080" d="M0 0h9v1h-9zM0 1h1v1h-1zM8 1h1v1h-1zM0 2h1v1h-1zM8 2h1v1h-1zM0 3h1v1h-1zM8 3h1v1h-1zM0 4h1v1h-1zM8 4h1v1h-1zM0 5h1v1h-1zM8 5h1v1h-1zM0 6h1v1h-1zM8 6h1v1h-1zM0 7h1v1h-1zM8 7h1v1h-1zM0 8h9v1h-9z"/><path fill="#fff" d="M1 1h7v1h-7zM1 2h3v1h-3zM5 2h3v1h-3zM1 3h3v1h-3zM5 3h3v1h-3zM1 4h1v1h-1zM7 4h1v1h-1zM1 5h3v1h-3zM5 5h3v1h-3zM1 6h3v1h-3zM5 6h3v1h-3zM1 7h7v1h-7z"/><path fill="#000" d="M4 2h1v1h-1zM4 3h1v1h-1zM2 4h5v1h-5zM4 5h1v1h-1zM4 6h1v1h-1z"/></svg>
<svg style="left:39px;top:432px" width="16" height="16" shape-rendering="crispEdges"><path fill="#e89070" d="M5 1h5v1h-5zM3 2h4v1h-4zM8 2h4v1h-4zM2 3h3v1h-3zM9 3h4v1h-4zM2 4h2v1h-2zM11 4h2v1h-2zM2 5h2v1h-2zM11 5h2v1h-2zM2 6h2v1h-2zM11 6h2v1h-2zM2 7h2v1h-2zM11 7h2v1h-2zM2 8h3v1h-3zM10 8h3v1h-3zM3 9h2v1h-2zM10 9h2v1h-2z"/><path fill="#c03020" d="M7 2h1v1h-1zM5 3h2v1h-2z"/><path fill="#fff4e8" d="M7 3h2v1h-2zM4 4h7v1h-7zM4 5h1v1h-1zM6 5h3v1h-3zM10 5h1v1h-1zM4 6h7v1h-7zM4 7h3v1h-3zM8 7h3v1h-3zM5 8h5v1h-5zM5 9h5v1h-5zM6 10h3v1h-3z"/><path fill="#104020" d="M5 5h1v1h-1zM9 5h1v1h-1zM2 11h2v1h-2zM11 11h2v1h-2zM1 12h1v1h-1zM4 12h1v1h-1zM10 12h1v1h-1zM13 12h1v1h-1zM0 13h1v1h-1zM5 13h1v1h-1zM9 13h1v1h-1zM14 13h1v1h-1zM6 14h3v1h-3z"/><path fill="#c04060" d="M7 7h1v1h-1z"/><path fill="#60d0a0" d="M2 12h2v1h-2zM11 12h2v1h-2zM1 13h4v1h-4zM10 13h4v1h-4zM0 14h6v1h-6zM9 14h6v1h-6zM0 15h15v1h-15z"/></svg>
<span class="t" style="left:59px;top:433px;">Азарова Мария Михайловна</span>
<svg style="left:23px;top:452px" width="9" height="9" shape-rendering="crispEdges"><path fill="#808080" d="M0 0h9v1h-9zM0 1h1v1h-1zM8 1h1v1h-1zM0 2h1v1h-1zM8 2h1v1h-1zM0 3h1v1h-1zM8 3h1v1h-1zM0 4h1v1h-1zM8 4h1v1h-1zM0 5h1v1h-1zM8 5h1v1h-1zM0 6h1v1h-1zM8 6h1v1h-1zM0 7h1v1h-1zM8 7h1v1h-1zM0 8h9v1h-9z"/><path fill="#fff" d="M1 1h7v1h-7zM1 2h3v1h-3zM5 2h3v1h-3zM1 3h3v1h-3zM5 3h3v1h-3zM1 4h1v1h-1zM7 4h1v1h-1zM1 5h3v1h-3zM5 5h3v1h-3zM1 6h3v1h-3zM5 6h3v1h-3zM1 7h7v1h-7z"/><path fill="#000" d="M4 2h1v1h-1zM4 3h1v1h-1zM2 4h5v1h-5zM4 5h1v1h-1zM4 6h1v1h-1z"/></svg>
<svg style="left:39px;top:448px" width="16" height="16" shape-rendering="crispEdges"><path fill="#a0a080" d="M5 1h5v1h-5zM4 2h7v1h-7zM3 3h2v1h-2zM10 3h2v1h-2z"/><path fill="#000" d="M2 5h1v1h-1zM5 5h1v1h-1zM8 5h1v1h-1zM11 5h1v1h-1zM2 6h1v1h-1zM8 6h1v1h-1zM11 6h1v1h-1zM7 7h1v1h-1zM3 8h1v1h-1zM11 8h1v1h-1zM4 9h2v1h-2zM7 9h1v1h-1zM9 9h2v1h-2zM6 10h3v1h-3z"/><path fill="#400050" d="M4 11h1v1h-1zM10 11h1v1h-1zM3 12h3v1h-3zM9 12h3v1h-3zM2 13h5v1h-5zM8 13h5v1h-5zM1 14h13v1h-13z"/></svg>
<span class="t" style="left:59px;top:449px;">Аиков Владимир Иванович</span>
<svg style="left:23px;top:468px" width="9" height="9" shape-rendering="crispEdges"><path fill="#808080" d="M0 0h9v1h-9zM0 1h1v1h-1zM8 1h1v1h-1zM0 2h1v1h-1zM8 2h1v1h-1zM0 3h1v1h-1zM8 3h1v1h-1zM0 4h1v1h-1zM8 4h1v1h-1zM0 5h1v1h-1zM8 5h1v1h-1zM0 6h1v1h-1zM8 6h1v1h-1zM0 7h1v1h-1zM8 7h1v1h-1zM0 8h9v1h-9z"/><path fill="#fff" d="M1 1h7v1h-7zM1 2h3v1h-3zM5 2h3v1h-3zM1 3h3v1h-3zM5 3h3v1h-3zM1 4h1v1h-1zM7 4h1v1h-1zM1 5h3v1h-3zM5 5h3v1h-3zM1 6h3v1h-3zM5 6h3v1h-3zM1 7h7v1h-7z"/><path fill="#000" d="M4 2h1v1h-1zM4 3h1v1h-1zM2 4h5v1h-5zM4 5h1v1h-1zM4 6h1v1h-1z"/></svg>
<svg style="left:39px;top:464px" width="16" height="16" shape-rendering="crispEdges"><path fill="#e89070" d="M5 1h5v1h-5zM3 2h4v1h-4zM8 2h4v1h-4zM2 3h3v1h-3zM9 3h4v1h-4zM2 4h2v1h-2zM11 4h2v1h-2zM2 5h2v1h-2zM11 5h2v1h-2zM2 6h2v1h-2zM11 6h2v1h-2zM2 7h2v1h-2zM11 7h2v1h-2zM2 8h3v1h-3zM10 8h3v1h-3zM3 9h2v1h-2zM10 9h2v1h-2z"/><path fill="#c03020" d="M7 2h1v1h-1zM5 3h2v1h-2z"/><path fill="#fff4e8" d="M7 3h2v1h-2zM4 4h7v1h-7zM4 5h1v1h-1zM6 5h3v1h-3zM10 5h1v1h-1zM4 6h7v1h-7zM4 7h3v1h-3zM8 7h3v1h-3zM5 8h5v1h-5zM5 9h5v1h-5zM6 10h3v1h-3z"/><path fill="#104020" d="M5 5h1v1h-1zM9 5h1v1h-1zM2 11h2v1h-2zM11 11h2v1h-2zM1 12h1v1h-1zM4 12h1v1h-1zM10 12h1v1h-1zM13 12h1v1h-1zM0 13h1v1h-1zM5 13h1v1h-1zM9 13h1v1h-1zM14 13h1v1h-1zM6 14h3v1h-3z"/><path fill="#c04060" d="M7 7h1v1h-1z"/><path fill="#60d0a0" d="M2 12h2v1h-2zM11 12h2v1h-2zM1 13h4v1h-4zM10 13h4v1h-4zM0 14h6v1h-6zM9 14h6v1h-6zM0 15h15v1h-15z"/></svg>
<span class="t" style="left:59px;top:465px;">Айдакова Зинаида Ивановна</span>
<svg style="left:23px;top:484px" width="9" height="9" shape-rendering="crispEdges"><path fill="#808080" d="M0 0h9v1h-9zM0 1h1v1h-1zM8 1h1v1h-1zM0 2h1v1h-1zM8 2h1v1h-1zM0 3h1v1h-1zM8 3h1v1h-1zM0 4h1v1h-1zM8 4h1v1h-1zM0 5h1v1h-1zM8 5h1v1h-1zM0 6h1v1h-1zM8 6h1v1h-1zM0 7h1v1h-1zM8 7h1v1h-1zM0 8h9v1h-9z"/><path fill="#fff" d="M1 1h7v1h-7zM1 2h3v1h-3zM5 2h3v1h-3zM1 3h3v1h-3zM5 3h3v1h-3zM1 4h1v1h-1zM7 4h1v1h-1zM1 5h3v1h-3zM5 5h3v1h-3zM1 6h3v1h-3zM5 6h3v1h-3zM1 7h7v1h-7z"/><path fill="#000" d="M4 2h1v1h-1zM4 3h1v1h-1zM2 4h5v1h-5zM4 5h1v1h-1zM4 6h1v1h-1z"/></svg>
<svg style="left:39px;top:480px" width="16" height="16" shape-rendering="crispEdges"><path fill="#e89070" d="M5 1h5v1h-5zM3 2h4v1h-4zM8 2h4v1h-4zM2 3h3v1h-3zM9 3h4v1h-4zM2 4h2v1h-2zM11 4h2v1h-2zM2 5h2v1h-2zM11 5h2v1h-2zM2 6h2v1h-2zM11 6h2v1h-2zM2 7h2v1h-2zM11 7h2v1h-2zM2 8h3v1h-3zM10 8h3v1h-3zM3 9h2v1h-2zM10 9h2v1h-2z"/><path fill="#c03020" d="M7 2h1v1h-1zM5 3h2v1h-2z"/><path fill="#fff4e8" d="M7 3h2v1h-2zM4 4h7v1h-7zM4 5h1v1h-1zM6 5h3v1h-3zM10 5h1v1h-1zM4 6h7v1h-7zM4 7h3v1h-3zM8 7h3v1h-3zM5 8h5v1h-5zM5 9h5v1h-5zM6 10h3v1h-3z"/><path fill="#104020" d="M5 5h1v1h-1zM9 5h1v1h-1zM2 11h2v1h-2zM11 11h2v1h-2zM1 12h1v1h-1zM4 12h1v1h-1zM10 12h1v1h-1zM13 12h1v1h-1zM0 13h1v1h-1zM5 13h1v1h-1zM9 13h1v1h-1zM14 13h1v1h-1zM6 14h3v1h-3z"/><path fill="#c04060" d="M7 7h1v1h-1z"/><path fill="#60d0a0" d="M2 12h2v1h-2zM11 12h2v1h-2zM1 13h4v1h-4zM10 13h4v1h-4zM0 14h6v1h-6zM9 14h6v1h-6zM0 15h15v1h-15z"/></svg>
<span class="t" style="left:59px;top:481px;">Айнетдинова Антонина Григорьевна</span>
<svg style="left:23px;top:500px" width="9" height="9" shape-rendering="crispEdges"><path fill="#808080" d="M0 0h9v1h-9zM0 1h1v1h-1zM8 1h1v1h-1zM0 2h1v1h-1zM8 2h1v1h-1zM0 3h1v1h-1zM8 3h1v1h-1zM0 4h1v1h-1zM8 4h1v1h-1zM0 5h1v1h-1zM8 5h1v1h-1zM0 6h1v1h-1zM8 6h1v1h-1zM0 7h1v1h-1zM8 7h1v1h-1zM0 8h9v1h-9z"/><path fill="#fff" d="M1 1h7v1h-7zM1 2h3v1h-3zM5 2h3v1h-3zM1 3h3v1h-3zM5 3h3v1h-3zM1 4h1v1h-1zM7 4h1v1h-1zM1 5h3v1h-3zM5 5h3v1h-3zM1 6h3v1h-3zM5 6h3v1h-3zM1 7h7v1h-7z"/><path fill="#000" d="M4 2h1v1h-1zM4 3h1v1h-1zM2 4h5v1h-5zM4 5h1v1h-1zM4 6h1v1h-1z"/></svg>
<svg style="left:39px;top:496px" width="16" height="16" shape-rendering="crispEdges"><path fill="#a0a080" d="M5 1h5v1h-5zM4 2h7v1h-7zM3 3h2v1h-2zM10 3h2v1h-2z"/><path fill="#000" d="M2 5h1v1h-1zM5 5h1v1h-1zM8 5h1v1h-1zM11 5h1v1h-1zM2 6h1v1h-1zM8 6h1v1h-1zM11 6h1v1h-1zM7 7h1v1h-1zM3 8h1v1h-1zM11 8h1v1h-1zM4 9h2v1h-2zM7 9h1v1h-1zM9 9h2v1h-2zM6 10h3v1h-3z"/><path fill="#400050" d="M4 11h1v1h-1zM10 11h1v1h-1zM3 12h3v1h-3zM9 12h3v1h-3zM2 13h5v1h-5zM8 13h5v1h-5zM1 14h13v1h-13z"/></svg>
<span class="t" style="left:59px;top:497px;">Айтбаев Шамиль Нурович</span>
</div>
<div style="left:226px;top:52px;width:16px;height:500px;background-color:#fff;background-image:linear-gradient(45deg,#d4d0c8 25%,transparent 25%,transparent 75%,#d4d0c8 75%),linear-gradient(45deg,#d4d0c8 25%,transparent 25%,transparent 75%,#d4d0c8 75%);background-size:2px 2px;background-position:0 0,1px 1px"></div>
<div style="left:226px;top:52px;width:16px;height:16px;background:#d4d0c8;border-style:solid;border-width:1px;border-color:#ffffff #404040 #404040 #ffffff;box-shadow:inset -1px -1px 0 #808080"></div>
<svg style="left:230px;top:58px" width="7" height="4" shape-rendering="crispEdges"><path fill="#000" d="M3 0h1v1h-1zM2 1h3v1h-3zM1 2h5v1h-5zM0 3h7v1h-7z"/></svg>
<div style="left:226px;top:68px;width:16px;height:8px;background:#d4d0c8;border-style:solid;border-width:1px;border-color:#ffffff #404040 #404040 #ffffff;box-shadow:inset -1px -1px 0 #808080"></div>
<div style="left:226px;top:536px;width:16px;height:16px;background:#d4d0c8;border-style:solid;border-width:1px;border-color:#ffffff #404040 #404040 #ffffff;box-shadow:inset -1px -1px 0 #808080"></div>
<svg style="left:230px;top:542px" width="7" height="4" shape-rendering="crispEdges"><path fill="#000" d="M0 0h7v1h-7zM1 1h5v1h-5zM2 2h3v1h-3zM3 3h1v1h-1z"/></svg>
<div style="left:7px;top:552px;width:219px;height:16px;background-color:#fff;background-image:linear-gradient(45deg,#d4d0c8 25%,transparent 25%,transparent 75%,#d4d0c8 75%),linear-gradient(45deg,#d4d0c8 25%,transparent 25%,transparent 75%,#d4d0c8 75%);background-size:2px 2px;background-position:0 0,1px 1px"></div>
<div style="left:7px;top:552px;width:16px;height:16px;background:#d4d0c8;border-style:solid;border-width:1px;border-color:#ffffff #404040 #404040 #ffffff;box-shadow:inset -1px -1px 0 #808080"></div>
<svg style="left:12px;top:556px" width="4" height="7" shape-rendering="crispEdges"><path fill="#000" d="M3 0h1v1h-1zM2 1h2v1h-2zM1 2h3v1h-3zM0 3h4v1h-4zM1 4h3v1h-3zM2 5h2v1h-2zM3 6h1v1h-1z"/></svg>
<div style="left:23px;top:552px;width:137px;height:16px;background:#d4d0c8;border-style:solid;border-width:1px;border-color:#ffffff #404040 #404040 #ffffff;box-shadow:inset -1px -1px 0 #808080"></div>
<div style="left:210px;top:552px;width:16px;height:16px;background:#d4d0c8;border-style:solid;border-width:1px;border-color:#ffffff #404040 #404040 #ffffff;box-shadow:inset -1px -1px 0 #808080"></div>
<svg style="left:216px;top:556px" width="4" height="7" shape-rendering="crispEdges"><path fill="#000" d="M0 0h1v1h-1zM0 1h2v1h-2zM0 2h3v1h-3zM0 3h4v1h-4zM0 4h3v1h-3zM0 5h2v1h-2zM0 6h1v1h-1z"/></svg>
<div style="left:226px;top:552px;width:16px;height:16px;background:#d4d0c8"></div>
<div style="left:244px;top:49px;width:1px;height:522px;background:#808080"></div>
<div style="left:245px;top:49px;width:2px;height:522px;background:#ececec"></div>
<div style="left:247px;top:49px;width:549px;height:1px;background:#ffffff"></div>
<div style="left:247px;top:49px;width:1px;height:521px;background:#ffffff"></div>
<div style="left:248px;top:50px;width:547px;height:1px;background:#ffffff"></div>
<div style="left:248px;top:50px;width:1px;height:520px;background:#ffffff"></div>
<div style="left:794px;top:49px;width:1px;height:522px;background:#808080"></div>
<div style="left:795px;top:49px;width:1px;height:522px;background:#808080"></div>
<div style="left:247px;top:569px;width:549px;height:1px;background:#808080"></div>
<div style="left:247px;top:570px;width:549px;height:1px;background:#808080"></div>
<div style="left:249px;top:71px;width:545px;height:403px;background:#d4d0c8;border-style:solid;border-width:1px;border-color:#ffffff #404040 #404040 #ffffff;box-shadow:inset -1px -1px 0 #808080"></div>
<div style="left:297px;top:53px;width:41px;height:18px;background:#d4d0c8;border-style:solid;border-width:1px 1px 0 1px;border-color:#ffffff #404040 #ffffff #ffffff;box-shadow:inset -1px 0 0 #808080"></div>
<span class="t" style="left:302px;top:56px;">Текст</span>
<div style="left:338px;top:53px;width:87px;height:18px;background:#d4d0c8;border-style:solid;border-width:1px 1px 0 1px;border-color:#ffffff #404040 #ffffff #ffffff;box-shadow:inset -1px 0 0 #808080"></div>
<span class="t" style="left:343px;top:56px;">Рекомендации</span>
<div style="left:425px;top:53px;width:111px;height:18px;background:#d4d0c8;border-style:solid;border-width:1px 1px 0 1px;border-color:#ffffff #404040 #ffffff #ffffff;box-shadow:inset -1px 0 0 #808080"></div>
<span class="t" style="left:430px;top:56px;">Рез. цитол. исслед.</span>
<div style="left:536px;top:53px;width:48px;height:18px;background:#d4d0c8;border-style:solid;border-width:1px 1px 0 1px;border-color:#ffffff #404040 #ffffff #ffffff;box-shadow:inset -1px 0 0 #808080"></div>
<span class="t" style="left:541px;top:56px;">Услуги</span>
<div style="left:249px;top:51px;width:49px;height:21px;background:#d4d0c8;border-style:solid;border-width:1px 1px 0 1px;border-color:#ffffff #404040 #ffffff #ffffff;box-shadow:inset -1px 0 0 #808080"></div>
<span class="t" style="left:257px;top:54px;">Шапка</span>
<span class="t" style="left:269px;top:75px;">Организация</span>
<div style="left:405px;top:75px;width:384px;height:21px;background:#d4d0c8;border-style:solid;border-width:1px;border-color:#808080 #ffffff #ffffff #808080;box-shadow:inset 1px 1px 0 #404040,inset -1px -1px 0 #d4d0c8"></div>
<span class="t" style="left:408px;top:79px;">ЦЕНТРАЛЬНАЯ КЛИНИЧЕСКАЯ БОЛЬНИЦА ГРАЖДАНСКОЙ АВИАЦИИ</span>
<span class="t" style="left:269px;top:99px;">Отделение организации</span>
<div style="left:405px;top:99px;width:156px;height:21px;background:#d4d0c8;border-style:solid;border-width:1px;border-color:#808080 #ffffff #ffffff #808080;box-shadow:inset 1px 1px 0 #404040,inset -1px -1px 0 #d4d0c8"></div>
<span class="t" style="left:408px;top:103px;">ОТДЕЛЕНИЕ ЭНДОСКОПИИ</span>
<span class="t" style="left:565px;top:100px;">Канал госпитализации</span>
<div style="left:685px;top:99px;width:104px;height:21px;background:#d4d0c8;border-style:solid;border-width:1px;border-color:#808080 #ffffff #ffffff #808080;box-shadow:inset 1px 1px 0 #404040,inset -1px -1px 0 #d4d0c8"></div>
<span class="t" style="left:688px;top:103px;">коммерческие</span>
<span class="t" style="left:269px;top:123px;">Заголовок</span>
<div style="left:405px;top:123px;width:384px;height:21px;background:#d4d0c8;border-style:solid;border-width:1px;border-color:#808080 #ffffff #ffffff #808080;box-shadow:inset 1px 1px 0 #404040,inset -1px -1px 0 #d4d0c8"></div>
<span class="t" style="left:408px;top:126px;">ЭЗОФАГОГАСТРОДУОДЕНОСКОПИЯ</span>
<div style="left:405px;top:147px;width:384px;height:20px;background:#fff;border-style:solid;border-width:1px;border-color:#808080 #ffffff #ffffff #808080;box-shadow:inset 1px 1px 0 #404040,inset -1px -1px 0 #d4d0c8"></div>
<span class="t" style="left:269px;top:172px;">Протокол №</span>
<div style="left:349px;top:171px;width:105px;height:20px;background:#fff;border-style:solid;border-width:1px;border-color:#808080 #ffffff #ffffff #808080;box-shadow:inset 1px 1px 0 #404040,inset -1px -1px 0 #d4d0c8"></div>
<span class="t" style="left:352px;top:174px;">64</span>
<span class="t" style="left:461px;top:171px;">Дата</span>
<div style="left:501px;top:171px;width:80px;height:20px;background:#fff;border-style:solid;border-width:1px;border-color:#808080 #ffffff #ffffff #808080;box-shadow:inset 1px 1px 0 #404040,inset -1px -1px 0 #d4d0c8"></div>
<div style="left:563px;top:173px;width:16px;height:16px;background:#d4d0c8;border-style:solid;border-width:1px;border-color:#ffffff #404040 #404040 #ffffff;box-shadow:inset -1px -1px 0 #808080"></div>
<svg style="left:568px;top:179px" width="7" height="4" shape-rendering="crispEdges"><path fill="#000" d="M0 0h7v1h-7zM1 1h5v1h-5zM2 2h3v1h-3zM3 3h1v1h-1z"/></svg>
<span class="t" style="left:505px;top:174px;">07.04.2006</span>
<span class="t" style="left:597px;top:171px;">Время</span>
<div style="left:637px;top:173px;width:13px;height:13px;background:#fff;border-style:solid;border-width:1px;border-color:#808080 #ffffff #ffffff #808080;box-shadow:inset 1px 1px 0 #404040,inset -1px -1px 0 #d4d0c8"></div>
<span class="t" style="left:269px;top:196px;">Ф.И.О.</span>
<div style="left:349px;top:192px;width:440px;height:20px;background:#d4d0c8;border-style:solid;border-width:1px;border-color:#808080 #ffffff #ffffff #808080;box-shadow:inset 1px 1px 0 #404040,inset -1px -1px 0 #d4d0c8"></div>
<span class="t" style="left:352px;top:195px;">Абидов Шарапудин Курбанович</span>
<span class="t" style="left:269px;top:220px;">Возраст</span>
<div style="left:349px;top:216px;width:37px;height:20px;background:#fff;border-style:solid;border-width:1px;border-color:#808080 #ffffff #ffffff #808080;box-shadow:inset 1px 1px 0 #404040,inset -1px -1px 0 #d4d0c8"></div>
<span class="t" style="left:352px;top:219px;">___45</span>
<span class="t" style="left:397px;top:220px;">лет (год)</span>
<span class="t" style="left:613px;top:220px;">Пол</span>
<div style="left:645px;top:216px;width:144px;height:21px;background:#d4d0c8;border-style:solid;border-width:1px;border-color:#808080 #ffffff #ffffff #808080;box-shadow:inset 1px 1px 0 #404040,inset -1px -1px 0 #d4d0c8"></div>
<span class="t" style="left:648px;top:220px;">М</span>
<span class="t" style="left:269px;top:244px;">Адрес</span>
<div style="left:349px;top:239px;width:440px;height:22px;background:#fff;border-style:solid;border-width:1px;border-color:#808080 #ffffff #ffffff #808080;box-shadow:inset 1px 1px 0 #404040,inset -1px -1px 0 #d4d0c8"></div>
<span class="t" style="left:352px;top:243px;">Респ. Дагестан</span>
<div style="left:771px;top:241px;width:16px;height:9px;background:#d4d0c8;border-style:solid;border-width:1px;border-color:#ffffff #404040 #404040 #ffffff;box-shadow:inset -1px -1px 0 #808080"></div>
<svg style="left:777px;top:244px" width="5" height="3" shape-rendering="crispEdges"><path fill="#909090" d="M2 0h1v1h-1zM1 1h3v1h-3zM0 2h5v1h-5z"/></svg>
<div style="left:771px;top:250px;width:16px;height:9px;background:#d4d0c8;border-style:solid;border-width:1px;border-color:#ffffff #404040 #404040 #ffffff;box-shadow:inset -1px -1px 0 #808080"></div>
<svg style="left:777px;top:253px" width="5" height="3" shape-rendering="crispEdges"><path fill="#909090" d="M0 0h5v1h-5zM1 1h3v1h-3zM2 2h1v1h-1z"/></svg>
<span class="t" style="left:269px;top:268px;">Телефон</span>
<div style="left:349px;top:265px;width:168px;height:20px;background:#fff;border-style:solid;border-width:1px;border-color:#808080 #ffffff #ffffff #808080;box-shadow:inset 1px 1px 0 #404040,inset -1px -1px 0 #d4d0c8"></div>
<span class="t" style="left:352px;top:268px;">8 111 1111111</span>
<span class="t" style="left:525px;top:268px;">Страховой полис</span>
<div style="left:637px;top:265px;width:152px;height:20px;background:#fff;border-style:solid;border-width:1px;border-color:#808080 #ffffff #ffffff #808080;box-shadow:inset 1px 1px 0 #404040,inset -1px -1px 0 #d4d0c8"></div>
<span class="t" style="left:640px;top:268px;">02. 67 000 НЭС0</span>
<span class="t" style="left:269px;top:292px;">Амб. карта №</span>
<div style="left:349px;top:288px;width:168px;height:20px;background:#d4d0c8;border-style:solid;border-width:1px;border-color:#808080 #ffffff #ffffff #808080;box-shadow:inset 1px 1px 0 #404040,inset -1px -1px 0 #d4d0c8"></div>
<span class="t" style="left:352px;top:291px;">--</span>
<span class="t" style="left:525px;top:291px;">История болезни №</span>
<div style="left:637px;top:288px;width:152px;height:20px;background:#fff;border-style:solid;border-width:1px;border-color:#808080 #ffffff #ffffff #808080;box-shadow:inset 1px 1px 0 #404040,inset -1px -1px 0 #d4d0c8"></div>
<span class="t" style="left:640px;top:291px;">2826</span>
<span class="t" style="left:269px;top:316px;">Отделение</span>
<span class="t" style="left:269px;top:329px;">(подраздел.)</span>
<div style="left:349px;top:313px;width:440px;height:19px;background:#fff;border-style:solid;border-width:1px;border-color:#808080 #ffffff #ffffff #808080;box-shadow:inset 1px 1px 0 #404040,inset -1px -1px 0 #d4d0c8"></div>
<div style="left:771px;top:315px;width:16px;height:15px;background:#d4d0c8;border-style:solid;border-width:1px;border-color:#ffffff #404040 #404040 #ffffff;box-shadow:inset -1px -1px 0 #808080"></div>
<svg style="left:776px;top:320px" width="7" height="4" shape-rendering="crispEdges"><path fill="#000" d="M0 0h7v1h-7zM1 1h5v1h-5zM2 2h3v1h-3zM3 3h1v1h-1z"/></svg>
<span class="t" style="left:352px;top:316px;">стационар</span>
<span class="t" style="left:269px;top:347px;">Анамнез</span>
<div style="left:349px;top:337px;width:440px;height:30px;background:#fff;border-style:solid;border-width:1px;border-color:#808080 #ffffff #ffffff #808080;box-shadow:inset 1px 1px 0 #404040,inset -1px -1px 0 #d4d0c8"></div>
<span class="t" style="left:351px;top:341px;letter-spacing:0.23px">ДИФФЕРЕНЦИРОВАТЬ МЕЖДУ НЕСТАБИЛЬНОЙ СТЕНОКАРДИЕЙ И</span>
<div style="left:771px;top:339px;width:16px;height:13px;background:#d4d0c8;border-style:solid;border-width:1px;border-color:#ffffff #404040 #404040 #ffffff;box-shadow:inset -1px -1px 0 #808080"></div>
<svg style="left:777px;top:343px" width="5" height="3" shape-rendering="crispEdges"><path fill="#000" d="M2 0h1v1h-1zM1 1h3v1h-3zM0 2h5v1h-5z"/></svg>
<div style="left:771px;top:352px;width:16px;height:13px;background:#d4d0c8;border-style:solid;border-width:1px;border-color:#ffffff #404040 #404040 #ffffff;box-shadow:inset -1px -1px 0 #808080"></div>
<svg style="left:777px;top:357px" width="5" height="3" shape-rendering="crispEdges"><path fill="#000" d="M0 0h5v1h-5zM1 1h3v1h-3zM2 2h1v1h-1z"/></svg>
<span class="t" style="left:269px;top:370px;">Модель</span>
<span class="t" style="left:269px;top:382px;">аппарата</span>
<div style="left:349px;top:372px;width:440px;height:19px;background:#fff;border-style:solid;border-width:1px;border-color:#808080 #ffffff #ffffff #808080;box-shadow:inset 1px 1px 0 #404040,inset -1px -1px 0 #d4d0c8"></div>
<div style="left:771px;top:374px;width:16px;height:15px;background:#d4d0c8;border-style:solid;border-width:1px;border-color:#ffffff #404040 #404040 #ffffff;box-shadow:inset -1px -1px 0 #808080"></div>
<svg style="left:776px;top:379px" width="7" height="4" shape-rendering="crispEdges"><path fill="#000" d="M0 0h7v1h-7zM1 1h5v1h-5zM2 2h3v1h-3zM3 3h1v1h-1z"/></svg>
<span class="t" style="left:352px;top:375px;">FUJINON-400 EG-450 WR5</span>
<span class="t" style="left:269px;top:396px;">Анестезия</span>
<div style="left:349px;top:396px;width:440px;height:19px;background:#fff;border-style:solid;border-width:1px;border-color:#808080 #ffffff #ffffff #808080;box-shadow:inset 1px 1px 0 #404040,inset -1px -1px 0 #d4d0c8"></div>
<div style="left:771px;top:398px;width:16px;height:15px;background:#d4d0c8;border-style:solid;border-width:1px;border-color:#ffffff #404040 #404040 #ffffff;box-shadow:inset -1px -1px 0 #808080"></div>
<svg style="left:776px;top:403px" width="7" height="4" shape-rendering="crispEdges"><path fill="#000" d="M0 0h7v1h-7zM1 1h5v1h-5zM2 2h3v1h-3zM3 3h1v1h-1z"/></svg>
<span class="t" style="left:352px;top:399px;">Лидокаин-спрей</span>
<span class="t" style="left:269px;top:420px;">Биопсия</span>
<div style="left:349px;top:419px;width:49px;height:20px;background:#fff;border-style:solid;border-width:1px;border-color:#808080 #ffffff #ffffff #808080;box-shadow:inset 1px 1px 0 #404040,inset -1px -1px 0 #d4d0c8"></div>
<div style="left:380px;top:421px;width:16px;height:16px;background:#d4d0c8;border-style:solid;border-width:1px;border-color:#ffffff #404040 #404040 #ffffff;box-shadow:inset -1px -1px 0 #808080"></div>
<svg style="left:385px;top:427px" width="7" height="4" shape-rendering="crispEdges"><path fill="#000" d="M0 0h7v1h-7zM1 1h5v1h-5zM2 2h3v1h-3zM3 3h1v1h-1z"/></svg>
<span class="t" style="left:354px;top:423px;">ДА</span>
<span class="t" style="left:413px;top:420px;">Цитология</span>
<div style="left:472px;top:419px;width:50px;height:20px;background:#fff;border-style:solid;border-width:1px;border-color:#808080 #ffffff #ffffff #808080;box-shadow:inset 1px 1px 0 #404040,inset -1px -1px 0 #d4d0c8"></div>
<div style="left:504px;top:421px;width:16px;height:16px;background:#d4d0c8;border-style:solid;border-width:1px;border-color:#ffffff #404040 #404040 #ffffff;box-shadow:inset -1px -1px 0 #808080"></div>
<svg style="left:509px;top:427px" width="7" height="4" shape-rendering="crispEdges"><path fill="#000" d="M0 0h7v1h-7zM1 1h5v1h-5zM2 2h3v1h-3zM3 3h1v1h-1z"/></svg>
<span class="t" style="left:477px;top:423px;">ДА</span>
<span class="t" style="left:533px;top:420px;">Гистология</span>
<div style="left:600px;top:419px;width:49px;height:20px;background:#fff;border-style:solid;border-width:1px;border-color:#808080 #ffffff #ffffff #808080;box-shadow:inset 1px 1px 0 #404040,inset -1px -1px 0 #d4d0c8"></div>
<div style="left:631px;top:421px;width:16px;height:16px;background:#d4d0c8;border-style:solid;border-width:1px;border-color:#ffffff #404040 #404040 #ffffff;box-shadow:inset -1px -1px 0 #808080"></div>
<svg style="left:636px;top:427px" width="7" height="4" shape-rendering="crispEdges"><path fill="#000" d="M0 0h7v1h-7zM1 1h5v1h-5zM2 2h3v1h-3zM3 3h1v1h-1z"/></svg>
<span class="t" style="left:603px;top:423px;">НЕТ</span>
<span class="t" style="left:269px;top:436px;">Лечебно-диаг</span>
<span class="t" style="left:269px;top:449px;">ностическая</span>
<div style="left:349px;top:443px;width:49px;height:20px;background:#fff;border-style:solid;border-width:1px;border-color:#808080 #ffffff #ffffff #808080;box-shadow:inset 1px 1px 0 #404040,inset -1px -1px 0 #d4d0c8"></div>
<div style="left:380px;top:445px;width:16px;height:16px;background:#d4d0c8;border-style:solid;border-width:1px;border-color:#ffffff #404040 #404040 #ffffff;box-shadow:inset -1px -1px 0 #808080"></div>
<svg style="left:385px;top:451px" width="7" height="4" shape-rendering="crispEdges"><path fill="#000" d="M0 0h7v1h-7zM1 1h5v1h-5zM2 2h3v1h-3zM3 3h1v1h-1z"/></svg>
<span class="t" style="left:354px;top:447px;">ДА</span>
<span class="t" style="left:533px;top:444px;">Ph-метрия</span>
<div style="left:600px;top:443px;width:49px;height:20px;background:#fff;border-style:solid;border-width:1px;border-color:#808080 #ffffff #ffffff #808080;box-shadow:inset 1px 1px 0 #404040,inset -1px -1px 0 #d4d0c8"></div>
<div style="left:631px;top:445px;width:16px;height:16px;background:#d4d0c8;border-style:solid;border-width:1px;border-color:#ffffff #404040 #404040 #ffffff;box-shadow:inset -1px -1px 0 #808080"></div>
<svg style="left:636px;top:451px" width="7" height="4" shape-rendering="crispEdges"><path fill="#000" d="M0 0h7v1h-7zM1 1h5v1h-5zM2 2h3v1h-3zM3 3h1v1h-1z"/></svg>
<span class="t" style="left:603px;top:447px;">НЕТ</span>
<span class="t" style="left:257px;top:483px;">Врач</span>
<div style="left:313px;top:480px;width:352px;height:20px;background:#fff;border-style:solid;border-width:1px;border-color:#808080 #ffffff #ffffff #808080;box-shadow:inset 1px 1px 0 #404040,inset -1px -1px 0 #d4d0c8"></div>
<div style="left:647px;top:482px;width:16px;height:16px;background:#d4d0c8;border-style:solid;border-width:1px;border-color:#ffffff #404040 #404040 #ffffff;box-shadow:inset -1px -1px 0 #808080"></div>
<svg style="left:652px;top:488px" width="7" height="4" shape-rendering="crispEdges"><path fill="#000" d="M0 0h7v1h-7zM1 1h5v1h-5zM2 2h3v1h-3zM3 3h1v1h-1z"/></svg>
<span class="t" style="left:316px;top:483px;">Гуськова И.И.</span>
<span class="t" style="left:256px;top:507px;">Ассистент</span>
<div style="left:313px;top:504px;width:352px;height:20px;background:#fff;border-style:solid;border-width:1px;border-color:#808080 #ffffff #ffffff #808080;box-shadow:inset 1px 1px 0 #404040,inset -1px -1px 0 #d4d0c8"></div>
<div style="left:647px;top:506px;width:16px;height:16px;background:#d4d0c8;border-style:solid;border-width:1px;border-color:#ffffff #404040 #404040 #ffffff;box-shadow:inset -1px -1px 0 #808080"></div>
<svg style="left:652px;top:512px" width="7" height="4" shape-rendering="crispEdges"><path fill="#000" d="M0 0h7v1h-7zM1 1h5v1h-5zM2 2h3v1h-3zM3 3h1v1h-1z"/></svg>
<div style="left:669px;top:481px;width:121px;height:25px;background:#d4d0c8;border-style:solid;border-width:1px;border-color:#ffffff #404040 #404040 #ffffff;box-shadow:inset -1px -1px 0 #808080"></div>
<span class="t" style="left:670px;width:132px;text-align:center;top:487px;color:#fff">Сохранить изменения</span>
<span class="t" style="left:669px;width:132px;text-align:center;top:486px;color:#808080">Сохранить изменения</span>
<div style="left:669px;top:509px;width:121px;height:25px;background:#d4d0c8;border-style:solid;border-width:1px;border-color:#ffffff #404040 #404040 #ffffff;box-shadow:inset -1px -1px 0 #808080"></div>
<span class="t" style="left:669px;width:132px;text-align:center;top:514px">Добавить протокол</span>
<div style="left:669px;top:537px;width:121px;height:25px;background:#d4d0c8;border-style:solid;border-width:1px;border-color:#ffffff #404040 #404040 #ffffff;box-shadow:inset -1px -1px 0 #808080"></div>
<span class="t" style="left:669px;width:132px;text-align:center;top:542px">Удалить протокол</span>
</body></html>
